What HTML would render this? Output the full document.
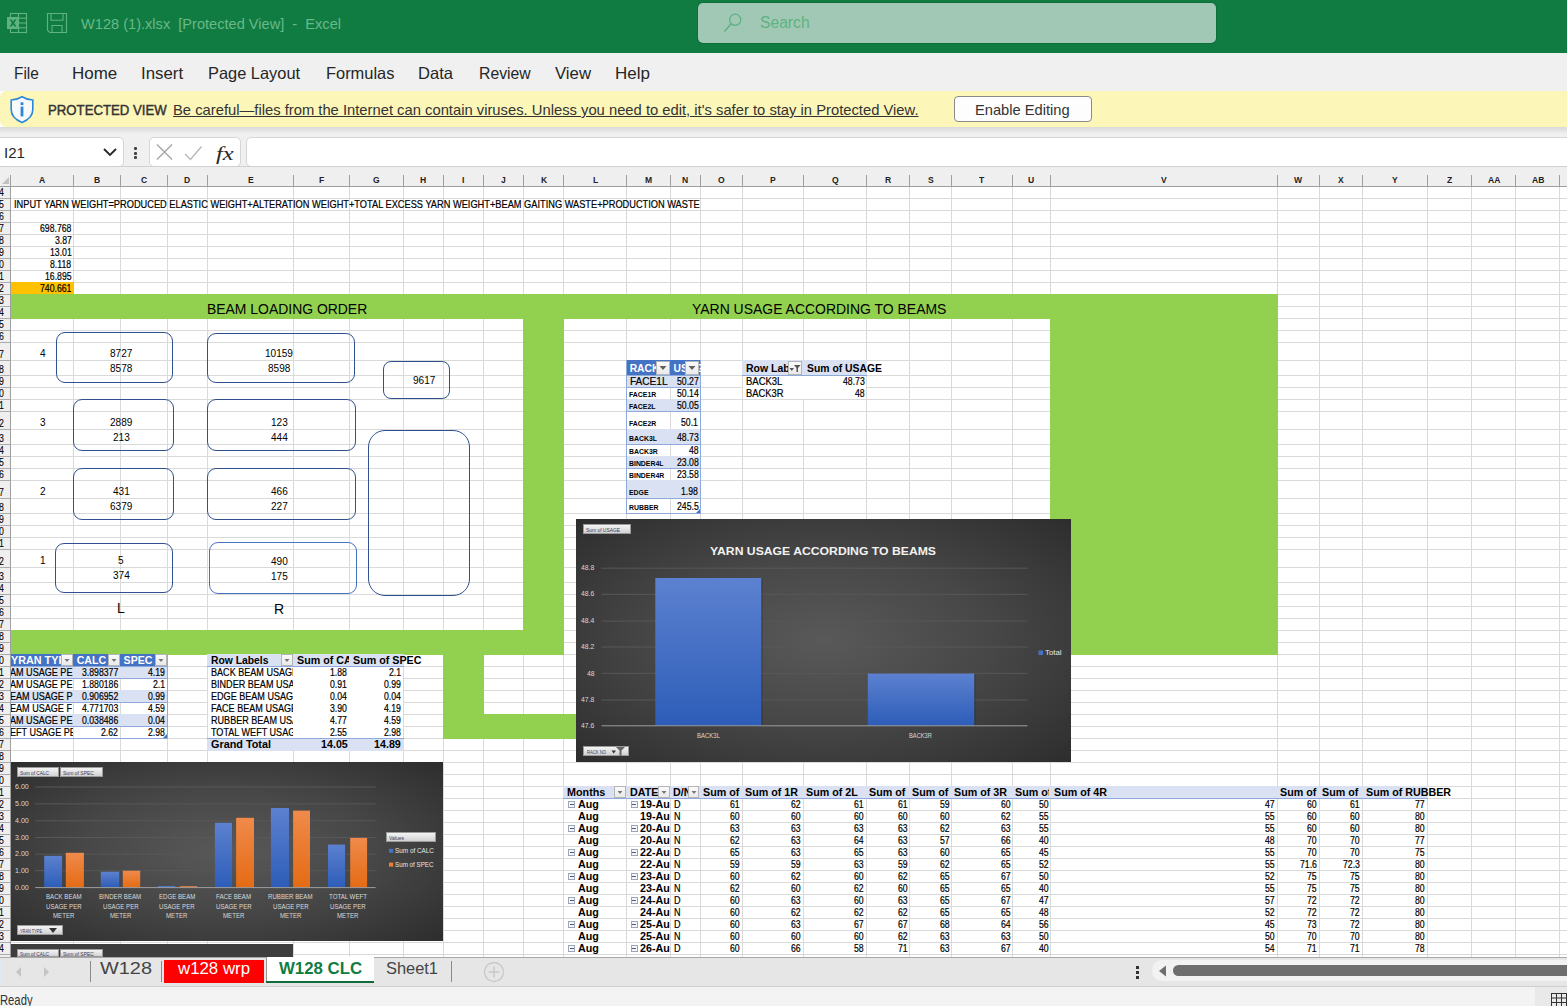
<!DOCTYPE html>
<html><head><meta charset="utf-8"><title>W128 (1).xlsx - Excel</title>
<style>
html,body{margin:0;padding:0;}
body{width:1567px;height:1006px;overflow:hidden;position:relative;background:#fff;font-family:"Liberation Sans",sans-serif;}
.t{position:absolute;white-space:pre;transform-origin:0 0;}
.r{position:absolute;box-sizing:border-box;}
svg{position:absolute;}
</style></head><body>
<div class="r" style="left:0px;top:0px;width:1567px;height:53px;background:#107c41"></div>
<svg style="left:6px;top:12px" width="22" height="22" viewBox="0 0 22 22">
<g fill="none" stroke="#5fb37f" stroke-width="1.1">
<rect x="4.5" y="1.5" width="16" height="19"/>
<line x1="4.5" y1="6.2" x2="20.5" y2="6.2"/><line x1="4.5" y1="11" x2="20.5" y2="11"/><line x1="4.5" y1="15.8" x2="20.5" y2="15.8"/>
<line x1="12.5" y1="1.5" x2="12.5" y2="20.5"/>
</g>
<rect x="1" y="5" width="12" height="12" fill="#5fb37f"/>
<path d="M3.6 7.4 L5.6 7.4 L7 9.7 L8.4 7.4 L10.4 7.4 L8.1 11 L10.4 14.6 L8.4 14.6 L7 12.3 L5.6 14.6 L3.6 14.6 L5.9 11 Z" fill="#107c41"/>
</svg>
<svg style="left:46px;top:12px" width="22" height="22" viewBox="0 0 22 22">
<g fill="none" stroke="#5fb37f" stroke-width="1.1">
<path d="M1.5 1.5 H20.5 V20.5 H3.8 L1.5 18.2 Z"/>
<path d="M5 1.5 V8.2 H17 V1.5"/>
<path d="M6 20.5 V13.5 H16 V20.5"/>
</g></svg>
<div class="t" style="left:81.00px;top:16px;font-size:15.0px;line-height:15.0px;color:#68b98a;transform:scaleX(0.9726);">W128 (1).xlsx  [Protected View]  -  Excel</div>
<div class="r" style="left:698px;top:3px;width:518px;height:40px;background:#a0c8b4;border-radius:5px;box-shadow:0 0 0 1px #0c6e39"></div>
<svg style="left:722px;top:12px" width="22" height="22" viewBox="0 0 22 22">
<circle cx="13.2" cy="7.8" r="5.6" fill="none" stroke="#5cb07f" stroke-width="1.2"/>
<line x1="9.2" y1="11.8" x2="2.5" y2="19.5" stroke="#5cb07f" stroke-width="1.3"/>
</svg>
<div class="t" style="left:760.00px;top:15px;font-size:16.0px;line-height:16.0px;color:#5eb381;transform:scaleX(0.9784);">Search</div>
<div class="r" style="left:0px;top:53px;width:1567px;height:38px;background:#f0f0f0"></div>
<div class="t" style="left:14.00px;top:65px;font-size:16.5px;line-height:16.5px;color:#262626;transform:scaleX(0.9327);">File</div>
<div class="t" style="left:71.50px;top:65px;font-size:16.5px;line-height:16.5px;color:#262626;transform:scaleX(1.0269);">Home</div>
<div class="t" style="left:141.20px;top:65px;font-size:16.5px;line-height:16.5px;color:#262626;transform:scaleX(1.0202);">Insert</div>
<div class="t" style="left:208.30px;top:65px;font-size:16.5px;line-height:16.5px;color:#262626;transform:scaleX(0.9939);">Page Layout</div>
<div class="t" style="left:325.50px;top:65px;font-size:16.5px;line-height:16.5px;color:#262626;transform:scaleX(0.9947);">Formulas</div>
<div class="t" style="left:418.30px;top:65px;font-size:16.5px;line-height:16.5px;color:#262626;transform:scaleX(1.0042);">Data</div>
<div class="t" style="left:478.60px;top:65px;font-size:16.5px;line-height:16.5px;color:#262626;transform:scaleX(0.9556);">Review</div>
<div class="t" style="left:555.20px;top:65px;font-size:16.5px;line-height:16.5px;color:#262626;transform:scaleX(1.0150);">View</div>
<div class="t" style="left:615.10px;top:65px;font-size:16.5px;line-height:16.5px;color:#262626;transform:scaleX(1.0284);">Help</div>
<div class="r" style="left:0px;top:127px;width:1567px;height:10px;background:#f0f0f0"></div>
<div class="r" style="left:0px;top:127px;width:1567px;height:7px;background:linear-gradient(#d9d9d9,#f0f0f0)"></div>
<div class="r" style="left:0px;top:91px;width:1567px;height:36px;background:#fcf6b8;border-radius:6px 0 0 6px"></div>
<svg style="left:9px;top:95px" width="26" height="29" viewBox="0 0 26 29">
<path d="M13 1.8 C9.5 4 6 5 2.2 5 V14.5 C2.2 20.5 7 25 13 27.5 C19 25 23.8 20.5 23.8 14.5 V5 C20 5 16.5 4 13 1.8 Z" fill="#f8f9fb" stroke="#2b88d8" stroke-width="1.6"/>
<rect x="11.6" y="7.3" width="2.8" height="2.8" fill="#2b88d8"/>
<rect x="11.6" y="11.6" width="2.8" height="9.8" fill="#2b88d8"/>
</svg>
<div class="t" style="left:47.90px;top:103px;font-size:14.5px;line-height:14.5px;color:#333333;transform:scaleX(0.9095);-webkit-text-stroke:0.45px #333;">PROTECTED VIEW</div>
<div class="t" style="left:173.30px;top:103px;font-size:14.8px;line-height:14.8px;color:#333333;transform:scaleX(0.9982);text-decoration:underline;">Be careful—files from the Internet can contain viruses. Unless you need to edit, it's safer to stay in Protected View.</div>
<div class="r" style="left:954px;top:96px;width:138px;height:26px;background:#fdfdfd;border:1px solid #8a8a8a;border-radius:4px"></div>
<div class="t" style="left:974.70px;top:103px;font-size:14.8px;line-height:14.8px;color:#333333;transform:scaleX(0.9921);">Enable Editing</div>
<div class="r" style="left:0px;top:137px;width:1567px;height:29px;background:#f0f0f0"></div>
<div class="r" style="left:-4px;top:137px;width:128px;height:30px;background:#fff;border:1px solid #d6d6d6;border-radius:5px"></div>
<div class="t" style="left:4.00px;top:145px;font-size:15.0px;line-height:15.0px;color:#262626;transform:scaleX(1.0071);">I21</div>
<svg style="left:102px;top:145px" width="16" height="14" viewBox="0 0 16 14">
<path d="M2 4 L8 10 L14 4" fill="none" stroke="#262626" stroke-width="1.8"/></svg>
<div class="r" style="left:134px;top:147px;width:3px;height:3px;background:#444;border-radius:1px"></div>
<div class="r" style="left:134px;top:151.5px;width:3px;height:3px;background:#444;border-radius:1px"></div>
<div class="r" style="left:134px;top:156px;width:3px;height:3px;background:#444;border-radius:1px"></div>
<div class="r" style="left:149px;top:137px;width:92px;height:30px;background:#fff;border:1px solid #d6d6d6;border-radius:5px"></div>
<svg style="left:150px;top:138px" width="90" height="28" viewBox="0 0 90 28">
<path d="M7 6.5 L22 21.5 M22 6.5 L7 21.5" stroke="#a6a6a6" stroke-width="1.4" fill="none"/>
<path d="M35 16 L40.5 21.5 L51.5 8.5" stroke="#b8b8b8" stroke-width="1.4" fill="none"/>
</svg>
<div class="t" style="left:216.00px;top:144px;font-size:19.0px;line-height:19.0px;color:#262626;transform:scaleX(1.2856);font-family:'Liberation Serif',serif;font-style:italic;">fx</div>
<div class="r" style="left:246px;top:137px;width:1330px;height:30px;background:#fff;border:1px solid #d6d6d6;border-radius:5px 0 0 5px"></div>
<div class="r" style="left:0px;top:166px;width:1567px;height:1px;background:#d0d0d0"></div>
<div class="r" style="left:0px;top:167px;width:1567px;height:19px;background:#efefef"></div>
<div class="r" style="left:0px;top:186px;width:1567px;height:1px;background:#9e9e9e"></div>
<svg style="left:2px;top:176px" width="8" height="9" viewBox="0 0 8 9"><path d="M7 1 L7 8 L0 8 Z" fill="#c2c2c2"/></svg>
<div class="r" style="left:10px;top:175px;width:1px;height:12px;background:#a0a0a0"></div>
<div class="r" style="left:73px;top:175px;width:1px;height:11px;background:#a0a0a0"></div>
<div class="t" style="left:39.15px;top:176px;font-size:9.0px;line-height:9.0px;color:#222;transform:scaleX(0.9500);font-weight:bold;">A</div>
<div class="r" style="left:120px;top:175px;width:1px;height:11px;background:#a0a0a0"></div>
<div class="t" style="left:94.15px;top:176px;font-size:9.0px;line-height:9.0px;color:#222;transform:scaleX(0.9500);font-weight:bold;">B</div>
<div class="r" style="left:167px;top:175px;width:1px;height:11px;background:#a0a0a0"></div>
<div class="t" style="left:140.91px;top:176px;font-size:9.0px;line-height:9.0px;color:#222;transform:scaleX(0.9500);font-weight:bold;">C</div>
<div class="r" style="left:207px;top:175px;width:1px;height:11px;background:#a0a0a0"></div>
<div class="t" style="left:184.41px;top:176px;font-size:9.0px;line-height:9.0px;color:#222;transform:scaleX(0.9500);font-weight:bold;">D</div>
<div class="r" style="left:293px;top:175px;width:1px;height:11px;background:#a0a0a0"></div>
<div class="t" style="left:247.65px;top:176px;font-size:9.0px;line-height:9.0px;color:#222;transform:scaleX(0.9500);font-weight:bold;">E</div>
<div class="r" style="left:349px;top:175px;width:1px;height:11px;background:#a0a0a0"></div>
<div class="t" style="left:318.89px;top:176px;font-size:9.0px;line-height:9.0px;color:#222;transform:scaleX(0.9500);font-weight:bold;">F</div>
<div class="r" style="left:403px;top:175px;width:1px;height:11px;background:#a0a0a0"></div>
<div class="t" style="left:373.17px;top:176px;font-size:9.0px;line-height:9.0px;color:#222;transform:scaleX(0.9500);font-weight:bold;">G</div>
<div class="r" style="left:443px;top:175px;width:1px;height:11px;background:#a0a0a0"></div>
<div class="t" style="left:420.41px;top:176px;font-size:9.0px;line-height:9.0px;color:#222;transform:scaleX(0.9500);font-weight:bold;">H</div>
<div class="r" style="left:483px;top:175px;width:1px;height:11px;background:#a0a0a0"></div>
<div class="t" style="left:462.31px;top:176px;font-size:9.0px;line-height:9.0px;color:#222;transform:scaleX(0.9500);font-weight:bold;">I</div>
<div class="r" style="left:523px;top:175px;width:1px;height:11px;background:#a0a0a0"></div>
<div class="t" style="left:501.36px;top:176px;font-size:9.0px;line-height:9.0px;color:#222;transform:scaleX(0.9500);font-weight:bold;">J</div>
<div class="r" style="left:563px;top:175px;width:1px;height:11px;background:#a0a0a0"></div>
<div class="t" style="left:540.65px;top:176px;font-size:9.0px;line-height:9.0px;color:#222;transform:scaleX(0.9500);font-weight:bold;">K</div>
<div class="r" style="left:626px;top:175px;width:1px;height:11px;background:#a0a0a0"></div>
<div class="t" style="left:592.62px;top:176px;font-size:9.0px;line-height:9.0px;color:#222;transform:scaleX(0.9500);font-weight:bold;">L</div>
<div class="r" style="left:670px;top:175px;width:1px;height:11px;background:#a0a0a0"></div>
<div class="t" style="left:644.94px;top:176px;font-size:9.0px;line-height:9.0px;color:#222;transform:scaleX(0.9500);font-weight:bold;">M</div>
<div class="r" style="left:700px;top:175px;width:1px;height:11px;background:#a0a0a0"></div>
<div class="t" style="left:682.41px;top:176px;font-size:9.0px;line-height:9.0px;color:#222;transform:scaleX(0.9500);font-weight:bold;">N</div>
<div class="r" style="left:742px;top:175px;width:1px;height:11px;background:#a0a0a0"></div>
<div class="t" style="left:718.17px;top:176px;font-size:9.0px;line-height:9.0px;color:#222;transform:scaleX(0.9500);font-weight:bold;">O</div>
<div class="r" style="left:803px;top:175px;width:1px;height:11px;background:#a0a0a0"></div>
<div class="t" style="left:770.15px;top:176px;font-size:9.0px;line-height:9.0px;color:#222;transform:scaleX(0.9500);font-weight:bold;">P</div>
<div class="r" style="left:866px;top:175px;width:1px;height:11px;background:#a0a0a0"></div>
<div class="t" style="left:831.67px;top:176px;font-size:9.0px;line-height:9.0px;color:#222;transform:scaleX(0.9500);font-weight:bold;">Q</div>
<div class="r" style="left:909px;top:175px;width:1px;height:11px;background:#a0a0a0"></div>
<div class="t" style="left:884.91px;top:176px;font-size:9.0px;line-height:9.0px;color:#222;transform:scaleX(0.9500);font-weight:bold;">R</div>
<div class="r" style="left:951px;top:175px;width:1px;height:11px;background:#a0a0a0"></div>
<div class="t" style="left:927.65px;top:176px;font-size:9.0px;line-height:9.0px;color:#222;transform:scaleX(0.9500);font-weight:bold;">S</div>
<div class="r" style="left:1012px;top:175px;width:1px;height:11px;background:#a0a0a0"></div>
<div class="t" style="left:979.39px;top:176px;font-size:9.0px;line-height:9.0px;color:#222;transform:scaleX(0.9500);font-weight:bold;">T</div>
<div class="r" style="left:1050px;top:175px;width:1px;height:11px;background:#a0a0a0"></div>
<div class="t" style="left:1028.41px;top:176px;font-size:9.0px;line-height:9.0px;color:#222;transform:scaleX(0.9500);font-weight:bold;">U</div>
<div class="r" style="left:1277px;top:175px;width:1px;height:11px;background:#a0a0a0"></div>
<div class="t" style="left:1161.15px;top:176px;font-size:9.0px;line-height:9.0px;color:#222;transform:scaleX(0.9500);font-weight:bold;">V</div>
<div class="r" style="left:1319px;top:175px;width:1px;height:11px;background:#a0a0a0"></div>
<div class="t" style="left:1294.46px;top:176px;font-size:9.0px;line-height:9.0px;color:#222;transform:scaleX(0.9500);font-weight:bold;">W</div>
<div class="r" style="left:1362px;top:175px;width:1px;height:11px;background:#a0a0a0"></div>
<div class="t" style="left:1338.15px;top:176px;font-size:9.0px;line-height:9.0px;color:#222;transform:scaleX(0.9500);font-weight:bold;">X</div>
<div class="r" style="left:1427px;top:175px;width:1px;height:11px;background:#a0a0a0"></div>
<div class="t" style="left:1392.15px;top:176px;font-size:9.0px;line-height:9.0px;color:#222;transform:scaleX(0.9500);font-weight:bold;">Y</div>
<div class="r" style="left:1471px;top:175px;width:1px;height:11px;background:#a0a0a0"></div>
<div class="t" style="left:1446.89px;top:176px;font-size:9.0px;line-height:9.0px;color:#222;transform:scaleX(0.9500);font-weight:bold;">Z</div>
<div class="r" style="left:1515px;top:175px;width:1px;height:11px;background:#a0a0a0"></div>
<div class="t" style="left:1487.80px;top:176px;font-size:9.0px;line-height:9.0px;color:#222;transform:scaleX(0.9500);font-weight:bold;">AA</div>
<div class="r" style="left:1559px;top:175px;width:1px;height:11px;background:#a0a0a0"></div>
<div class="t" style="left:1531.80px;top:176px;font-size:9.0px;line-height:9.0px;color:#222;transform:scaleX(0.9500);font-weight:bold;">AB</div>
<div class="r" style="left:11px;top:187px;width:1556px;height:770px;background:#ffffff"></div>
<div class="r" style="left:73px;top:187px;width:1px;height:770px;background:#dadada"></div>
<div class="r" style="left:120px;top:187px;width:1px;height:770px;background:#dadada"></div>
<div class="r" style="left:167px;top:187px;width:1px;height:770px;background:#dadada"></div>
<div class="r" style="left:207px;top:187px;width:1px;height:770px;background:#dadada"></div>
<div class="r" style="left:293px;top:187px;width:1px;height:770px;background:#dadada"></div>
<div class="r" style="left:349px;top:187px;width:1px;height:770px;background:#dadada"></div>
<div class="r" style="left:403px;top:187px;width:1px;height:770px;background:#dadada"></div>
<div class="r" style="left:443px;top:187px;width:1px;height:770px;background:#dadada"></div>
<div class="r" style="left:483px;top:187px;width:1px;height:770px;background:#dadada"></div>
<div class="r" style="left:523px;top:187px;width:1px;height:770px;background:#dadada"></div>
<div class="r" style="left:563px;top:187px;width:1px;height:770px;background:#dadada"></div>
<div class="r" style="left:626px;top:187px;width:1px;height:770px;background:#dadada"></div>
<div class="r" style="left:670px;top:187px;width:1px;height:770px;background:#dadada"></div>
<div class="r" style="left:700px;top:187px;width:1px;height:770px;background:#dadada"></div>
<div class="r" style="left:742px;top:187px;width:1px;height:770px;background:#dadada"></div>
<div class="r" style="left:803px;top:187px;width:1px;height:770px;background:#dadada"></div>
<div class="r" style="left:866px;top:187px;width:1px;height:770px;background:#dadada"></div>
<div class="r" style="left:909px;top:187px;width:1px;height:770px;background:#dadada"></div>
<div class="r" style="left:951px;top:187px;width:1px;height:770px;background:#dadada"></div>
<div class="r" style="left:1012px;top:187px;width:1px;height:770px;background:#dadada"></div>
<div class="r" style="left:1050px;top:187px;width:1px;height:770px;background:#dadada"></div>
<div class="r" style="left:1277px;top:187px;width:1px;height:770px;background:#dadada"></div>
<div class="r" style="left:1319px;top:187px;width:1px;height:770px;background:#dadada"></div>
<div class="r" style="left:1362px;top:187px;width:1px;height:770px;background:#dadada"></div>
<div class="r" style="left:1427px;top:187px;width:1px;height:770px;background:#dadada"></div>
<div class="r" style="left:1471px;top:187px;width:1px;height:770px;background:#dadada"></div>
<div class="r" style="left:1515px;top:187px;width:1px;height:770px;background:#dadada"></div>
<div class="r" style="left:1559px;top:187px;width:1px;height:770px;background:#dadada"></div>
<div class="r" style="left:11px;top:198px;width:1556px;height:1px;background:#dadada"></div>
<div class="r" style="left:11px;top:210px;width:1556px;height:1px;background:#dadada"></div>
<div class="r" style="left:11px;top:222px;width:1556px;height:1px;background:#dadada"></div>
<div class="r" style="left:11px;top:234px;width:1556px;height:1px;background:#dadada"></div>
<div class="r" style="left:11px;top:246px;width:1556px;height:1px;background:#dadada"></div>
<div class="r" style="left:11px;top:258px;width:1556px;height:1px;background:#dadada"></div>
<div class="r" style="left:11px;top:270px;width:1556px;height:1px;background:#dadada"></div>
<div class="r" style="left:11px;top:282px;width:1556px;height:1px;background:#dadada"></div>
<div class="r" style="left:11px;top:294px;width:1556px;height:1px;background:#dadada"></div>
<div class="r" style="left:11px;top:306px;width:1556px;height:1px;background:#dadada"></div>
<div class="r" style="left:11px;top:318px;width:1556px;height:1px;background:#dadada"></div>
<div class="r" style="left:11px;top:330px;width:1556px;height:1px;background:#dadada"></div>
<div class="r" style="left:11px;top:342px;width:1556px;height:1px;background:#dadada"></div>
<div class="r" style="left:11px;top:360px;width:1556px;height:1px;background:#dadada"></div>
<div class="r" style="left:11px;top:375px;width:1556px;height:1px;background:#dadada"></div>
<div class="r" style="left:11px;top:387px;width:1556px;height:1px;background:#dadada"></div>
<div class="r" style="left:11px;top:399px;width:1556px;height:1px;background:#dadada"></div>
<div class="r" style="left:11px;top:411px;width:1556px;height:1px;background:#dadada"></div>
<div class="r" style="left:11px;top:429px;width:1556px;height:1px;background:#dadada"></div>
<div class="r" style="left:11px;top:444px;width:1556px;height:1px;background:#dadada"></div>
<div class="r" style="left:11px;top:456px;width:1556px;height:1px;background:#dadada"></div>
<div class="r" style="left:11px;top:468px;width:1556px;height:1px;background:#dadada"></div>
<div class="r" style="left:11px;top:480px;width:1556px;height:1px;background:#dadada"></div>
<div class="r" style="left:11px;top:498px;width:1556px;height:1px;background:#dadada"></div>
<div class="r" style="left:11px;top:513px;width:1556px;height:1px;background:#dadada"></div>
<div class="r" style="left:11px;top:525px;width:1556px;height:1px;background:#dadada"></div>
<div class="r" style="left:11px;top:537px;width:1556px;height:1px;background:#dadada"></div>
<div class="r" style="left:11px;top:549px;width:1556px;height:1px;background:#dadada"></div>
<div class="r" style="left:11px;top:567px;width:1556px;height:1px;background:#dadada"></div>
<div class="r" style="left:11px;top:582px;width:1556px;height:1px;background:#dadada"></div>
<div class="r" style="left:11px;top:594px;width:1556px;height:1px;background:#dadada"></div>
<div class="r" style="left:11px;top:606px;width:1556px;height:1px;background:#dadada"></div>
<div class="r" style="left:11px;top:618px;width:1556px;height:1px;background:#dadada"></div>
<div class="r" style="left:11px;top:630px;width:1556px;height:1px;background:#dadada"></div>
<div class="r" style="left:11px;top:642px;width:1556px;height:1px;background:#dadada"></div>
<div class="r" style="left:11px;top:654px;width:1556px;height:1px;background:#dadada"></div>
<div class="r" style="left:11px;top:666px;width:1556px;height:1px;background:#dadada"></div>
<div class="r" style="left:11px;top:678px;width:1556px;height:1px;background:#dadada"></div>
<div class="r" style="left:11px;top:690px;width:1556px;height:1px;background:#dadada"></div>
<div class="r" style="left:11px;top:702px;width:1556px;height:1px;background:#dadada"></div>
<div class="r" style="left:11px;top:714px;width:1556px;height:1px;background:#dadada"></div>
<div class="r" style="left:11px;top:726px;width:1556px;height:1px;background:#dadada"></div>
<div class="r" style="left:11px;top:738px;width:1556px;height:1px;background:#dadada"></div>
<div class="r" style="left:11px;top:750px;width:1556px;height:1px;background:#dadada"></div>
<div class="r" style="left:11px;top:762px;width:1556px;height:1px;background:#dadada"></div>
<div class="r" style="left:11px;top:774px;width:1556px;height:1px;background:#dadada"></div>
<div class="r" style="left:11px;top:786px;width:1556px;height:1px;background:#dadada"></div>
<div class="r" style="left:11px;top:798px;width:1556px;height:1px;background:#dadada"></div>
<div class="r" style="left:11px;top:810px;width:1556px;height:1px;background:#dadada"></div>
<div class="r" style="left:11px;top:822px;width:1556px;height:1px;background:#dadada"></div>
<div class="r" style="left:11px;top:834px;width:1556px;height:1px;background:#dadada"></div>
<div class="r" style="left:11px;top:846px;width:1556px;height:1px;background:#dadada"></div>
<div class="r" style="left:11px;top:858px;width:1556px;height:1px;background:#dadada"></div>
<div class="r" style="left:11px;top:870px;width:1556px;height:1px;background:#dadada"></div>
<div class="r" style="left:11px;top:882px;width:1556px;height:1px;background:#dadada"></div>
<div class="r" style="left:11px;top:894px;width:1556px;height:1px;background:#dadada"></div>
<div class="r" style="left:11px;top:906px;width:1556px;height:1px;background:#dadada"></div>
<div class="r" style="left:11px;top:918px;width:1556px;height:1px;background:#dadada"></div>
<div class="r" style="left:11px;top:930px;width:1556px;height:1px;background:#dadada"></div>
<div class="r" style="left:11px;top:942px;width:1556px;height:1px;background:#dadada"></div>
<div class="r" style="left:11px;top:954px;width:1556px;height:1px;background:#dadada"></div>
<div class="r" style="left:0px;top:187px;width:10px;height:770px;background:#efefef"></div>
<div class="r" style="left:10px;top:187px;width:1px;height:770px;background:#a0a0a0"></div>
<div class="r" style="left:0px;top:198px;width:10px;height:1px;background:#ababab"></div>
<div class="t" style="left:-0.67px;top:188px;font-size:10.3px;line-height:10.3px;color:#000;transform:scaleX(0.8500);-webkit-text-stroke:0.1px #000;">4</div>
<div class="r" style="left:0px;top:210px;width:10px;height:1px;background:#ababab"></div>
<div class="t" style="left:-0.67px;top:200px;font-size:10.3px;line-height:10.3px;color:#000;transform:scaleX(0.8500);-webkit-text-stroke:0.1px #000;">5</div>
<div class="r" style="left:0px;top:222px;width:10px;height:1px;background:#ababab"></div>
<div class="t" style="left:-0.67px;top:212px;font-size:10.3px;line-height:10.3px;color:#000;transform:scaleX(0.8500);-webkit-text-stroke:0.1px #000;">6</div>
<div class="r" style="left:0px;top:234px;width:10px;height:1px;background:#ababab"></div>
<div class="t" style="left:-0.67px;top:224px;font-size:10.3px;line-height:10.3px;color:#000;transform:scaleX(0.8500);-webkit-text-stroke:0.1px #000;">7</div>
<div class="r" style="left:0px;top:246px;width:10px;height:1px;background:#ababab"></div>
<div class="t" style="left:-0.67px;top:236px;font-size:10.3px;line-height:10.3px;color:#000;transform:scaleX(0.8500);-webkit-text-stroke:0.1px #000;">8</div>
<div class="r" style="left:0px;top:258px;width:10px;height:1px;background:#ababab"></div>
<div class="t" style="left:-0.67px;top:248px;font-size:10.3px;line-height:10.3px;color:#000;transform:scaleX(0.8500);-webkit-text-stroke:0.1px #000;">9</div>
<div class="r" style="left:0px;top:270px;width:10px;height:1px;background:#ababab"></div>
<div class="t" style="left:-0.67px;top:260px;font-size:10.3px;line-height:10.3px;color:#000;transform:scaleX(0.8500);-webkit-text-stroke:0.1px #000;">0</div>
<div class="r" style="left:0px;top:282px;width:10px;height:1px;background:#ababab"></div>
<div class="t" style="left:-0.67px;top:272px;font-size:10.3px;line-height:10.3px;color:#000;transform:scaleX(0.8500);-webkit-text-stroke:0.1px #000;">1</div>
<div class="r" style="left:0px;top:294px;width:10px;height:1px;background:#ababab"></div>
<div class="t" style="left:-0.67px;top:284px;font-size:10.3px;line-height:10.3px;color:#000;transform:scaleX(0.8500);-webkit-text-stroke:0.1px #000;">2</div>
<div class="r" style="left:0px;top:306px;width:10px;height:1px;background:#ababab"></div>
<div class="t" style="left:-0.67px;top:296px;font-size:10.3px;line-height:10.3px;color:#000;transform:scaleX(0.8500);-webkit-text-stroke:0.1px #000;">3</div>
<div class="r" style="left:0px;top:318px;width:10px;height:1px;background:#ababab"></div>
<div class="t" style="left:-0.67px;top:308px;font-size:10.3px;line-height:10.3px;color:#000;transform:scaleX(0.8500);-webkit-text-stroke:0.1px #000;">4</div>
<div class="r" style="left:0px;top:330px;width:10px;height:1px;background:#ababab"></div>
<div class="t" style="left:-0.67px;top:320px;font-size:10.3px;line-height:10.3px;color:#000;transform:scaleX(0.8500);-webkit-text-stroke:0.1px #000;">5</div>
<div class="r" style="left:0px;top:342px;width:10px;height:1px;background:#ababab"></div>
<div class="t" style="left:-0.67px;top:332px;font-size:10.3px;line-height:10.3px;color:#000;transform:scaleX(0.8500);-webkit-text-stroke:0.1px #000;">6</div>
<div class="r" style="left:0px;top:360px;width:10px;height:1px;background:#ababab"></div>
<div class="t" style="left:-0.67px;top:350px;font-size:10.3px;line-height:10.3px;color:#000;transform:scaleX(0.8500);-webkit-text-stroke:0.1px #000;">7</div>
<div class="r" style="left:0px;top:375px;width:10px;height:1px;background:#ababab"></div>
<div class="t" style="left:-0.67px;top:365px;font-size:10.3px;line-height:10.3px;color:#000;transform:scaleX(0.8500);-webkit-text-stroke:0.1px #000;">8</div>
<div class="r" style="left:0px;top:387px;width:10px;height:1px;background:#ababab"></div>
<div class="t" style="left:-0.67px;top:377px;font-size:10.3px;line-height:10.3px;color:#000;transform:scaleX(0.8500);-webkit-text-stroke:0.1px #000;">9</div>
<div class="r" style="left:0px;top:399px;width:10px;height:1px;background:#ababab"></div>
<div class="t" style="left:-0.67px;top:389px;font-size:10.3px;line-height:10.3px;color:#000;transform:scaleX(0.8500);-webkit-text-stroke:0.1px #000;">0</div>
<div class="r" style="left:0px;top:411px;width:10px;height:1px;background:#ababab"></div>
<div class="t" style="left:-0.67px;top:401px;font-size:10.3px;line-height:10.3px;color:#000;transform:scaleX(0.8500);-webkit-text-stroke:0.1px #000;">1</div>
<div class="r" style="left:0px;top:429px;width:10px;height:1px;background:#ababab"></div>
<div class="t" style="left:-0.67px;top:419px;font-size:10.3px;line-height:10.3px;color:#000;transform:scaleX(0.8500);-webkit-text-stroke:0.1px #000;">2</div>
<div class="r" style="left:0px;top:444px;width:10px;height:1px;background:#ababab"></div>
<div class="t" style="left:-0.67px;top:434px;font-size:10.3px;line-height:10.3px;color:#000;transform:scaleX(0.8500);-webkit-text-stroke:0.1px #000;">3</div>
<div class="r" style="left:0px;top:456px;width:10px;height:1px;background:#ababab"></div>
<div class="t" style="left:-0.67px;top:446px;font-size:10.3px;line-height:10.3px;color:#000;transform:scaleX(0.8500);-webkit-text-stroke:0.1px #000;">4</div>
<div class="r" style="left:0px;top:468px;width:10px;height:1px;background:#ababab"></div>
<div class="t" style="left:-0.67px;top:458px;font-size:10.3px;line-height:10.3px;color:#000;transform:scaleX(0.8500);-webkit-text-stroke:0.1px #000;">5</div>
<div class="r" style="left:0px;top:480px;width:10px;height:1px;background:#ababab"></div>
<div class="t" style="left:-0.67px;top:470px;font-size:10.3px;line-height:10.3px;color:#000;transform:scaleX(0.8500);-webkit-text-stroke:0.1px #000;">6</div>
<div class="r" style="left:0px;top:498px;width:10px;height:1px;background:#ababab"></div>
<div class="t" style="left:-0.67px;top:488px;font-size:10.3px;line-height:10.3px;color:#000;transform:scaleX(0.8500);-webkit-text-stroke:0.1px #000;">7</div>
<div class="r" style="left:0px;top:513px;width:10px;height:1px;background:#ababab"></div>
<div class="t" style="left:-0.67px;top:503px;font-size:10.3px;line-height:10.3px;color:#000;transform:scaleX(0.8500);-webkit-text-stroke:0.1px #000;">8</div>
<div class="r" style="left:0px;top:525px;width:10px;height:1px;background:#ababab"></div>
<div class="t" style="left:-0.67px;top:515px;font-size:10.3px;line-height:10.3px;color:#000;transform:scaleX(0.8500);-webkit-text-stroke:0.1px #000;">9</div>
<div class="r" style="left:0px;top:537px;width:10px;height:1px;background:#ababab"></div>
<div class="t" style="left:-0.67px;top:527px;font-size:10.3px;line-height:10.3px;color:#000;transform:scaleX(0.8500);-webkit-text-stroke:0.1px #000;">0</div>
<div class="r" style="left:0px;top:549px;width:10px;height:1px;background:#ababab"></div>
<div class="t" style="left:-0.67px;top:539px;font-size:10.3px;line-height:10.3px;color:#000;transform:scaleX(0.8500);-webkit-text-stroke:0.1px #000;">1</div>
<div class="r" style="left:0px;top:567px;width:10px;height:1px;background:#ababab"></div>
<div class="t" style="left:-0.67px;top:557px;font-size:10.3px;line-height:10.3px;color:#000;transform:scaleX(0.8500);-webkit-text-stroke:0.1px #000;">2</div>
<div class="r" style="left:0px;top:582px;width:10px;height:1px;background:#ababab"></div>
<div class="t" style="left:-0.67px;top:572px;font-size:10.3px;line-height:10.3px;color:#000;transform:scaleX(0.8500);-webkit-text-stroke:0.1px #000;">3</div>
<div class="r" style="left:0px;top:594px;width:10px;height:1px;background:#ababab"></div>
<div class="t" style="left:-0.67px;top:584px;font-size:10.3px;line-height:10.3px;color:#000;transform:scaleX(0.8500);-webkit-text-stroke:0.1px #000;">4</div>
<div class="r" style="left:0px;top:606px;width:10px;height:1px;background:#ababab"></div>
<div class="t" style="left:-0.67px;top:596px;font-size:10.3px;line-height:10.3px;color:#000;transform:scaleX(0.8500);-webkit-text-stroke:0.1px #000;">5</div>
<div class="r" style="left:0px;top:618px;width:10px;height:1px;background:#ababab"></div>
<div class="t" style="left:-0.67px;top:608px;font-size:10.3px;line-height:10.3px;color:#000;transform:scaleX(0.8500);-webkit-text-stroke:0.1px #000;">6</div>
<div class="r" style="left:0px;top:630px;width:10px;height:1px;background:#ababab"></div>
<div class="t" style="left:-0.67px;top:620px;font-size:10.3px;line-height:10.3px;color:#000;transform:scaleX(0.8500);-webkit-text-stroke:0.1px #000;">7</div>
<div class="r" style="left:0px;top:642px;width:10px;height:1px;background:#ababab"></div>
<div class="t" style="left:-0.67px;top:632px;font-size:10.3px;line-height:10.3px;color:#000;transform:scaleX(0.8500);-webkit-text-stroke:0.1px #000;">8</div>
<div class="r" style="left:0px;top:654px;width:10px;height:1px;background:#ababab"></div>
<div class="t" style="left:-0.67px;top:644px;font-size:10.3px;line-height:10.3px;color:#000;transform:scaleX(0.8500);-webkit-text-stroke:0.1px #000;">9</div>
<div class="r" style="left:0px;top:666px;width:10px;height:1px;background:#ababab"></div>
<div class="t" style="left:-0.67px;top:656px;font-size:10.3px;line-height:10.3px;color:#000;transform:scaleX(0.8500);-webkit-text-stroke:0.1px #000;">0</div>
<div class="r" style="left:0px;top:678px;width:10px;height:1px;background:#ababab"></div>
<div class="t" style="left:-0.67px;top:668px;font-size:10.3px;line-height:10.3px;color:#000;transform:scaleX(0.8500);-webkit-text-stroke:0.1px #000;">1</div>
<div class="r" style="left:0px;top:690px;width:10px;height:1px;background:#ababab"></div>
<div class="t" style="left:-0.67px;top:680px;font-size:10.3px;line-height:10.3px;color:#000;transform:scaleX(0.8500);-webkit-text-stroke:0.1px #000;">2</div>
<div class="r" style="left:0px;top:702px;width:10px;height:1px;background:#ababab"></div>
<div class="t" style="left:-0.67px;top:692px;font-size:10.3px;line-height:10.3px;color:#000;transform:scaleX(0.8500);-webkit-text-stroke:0.1px #000;">3</div>
<div class="r" style="left:0px;top:714px;width:10px;height:1px;background:#ababab"></div>
<div class="t" style="left:-0.67px;top:704px;font-size:10.3px;line-height:10.3px;color:#000;transform:scaleX(0.8500);-webkit-text-stroke:0.1px #000;">4</div>
<div class="r" style="left:0px;top:726px;width:10px;height:1px;background:#ababab"></div>
<div class="t" style="left:-0.67px;top:716px;font-size:10.3px;line-height:10.3px;color:#000;transform:scaleX(0.8500);-webkit-text-stroke:0.1px #000;">5</div>
<div class="r" style="left:0px;top:738px;width:10px;height:1px;background:#ababab"></div>
<div class="t" style="left:-0.67px;top:728px;font-size:10.3px;line-height:10.3px;color:#000;transform:scaleX(0.8500);-webkit-text-stroke:0.1px #000;">6</div>
<div class="r" style="left:0px;top:750px;width:10px;height:1px;background:#ababab"></div>
<div class="t" style="left:-0.67px;top:740px;font-size:10.3px;line-height:10.3px;color:#000;transform:scaleX(0.8500);-webkit-text-stroke:0.1px #000;">7</div>
<div class="r" style="left:0px;top:762px;width:10px;height:1px;background:#ababab"></div>
<div class="t" style="left:-0.67px;top:752px;font-size:10.3px;line-height:10.3px;color:#000;transform:scaleX(0.8500);-webkit-text-stroke:0.1px #000;">8</div>
<div class="r" style="left:0px;top:774px;width:10px;height:1px;background:#ababab"></div>
<div class="t" style="left:-0.67px;top:764px;font-size:10.3px;line-height:10.3px;color:#000;transform:scaleX(0.8500);-webkit-text-stroke:0.1px #000;">9</div>
<div class="r" style="left:0px;top:786px;width:10px;height:1px;background:#ababab"></div>
<div class="t" style="left:-0.67px;top:776px;font-size:10.3px;line-height:10.3px;color:#000;transform:scaleX(0.8500);-webkit-text-stroke:0.1px #000;">0</div>
<div class="r" style="left:0px;top:798px;width:10px;height:1px;background:#ababab"></div>
<div class="t" style="left:-0.67px;top:788px;font-size:10.3px;line-height:10.3px;color:#000;transform:scaleX(0.8500);-webkit-text-stroke:0.1px #000;">1</div>
<div class="r" style="left:0px;top:810px;width:10px;height:1px;background:#ababab"></div>
<div class="t" style="left:-0.67px;top:800px;font-size:10.3px;line-height:10.3px;color:#000;transform:scaleX(0.8500);-webkit-text-stroke:0.1px #000;">2</div>
<div class="r" style="left:0px;top:822px;width:10px;height:1px;background:#ababab"></div>
<div class="t" style="left:-0.67px;top:812px;font-size:10.3px;line-height:10.3px;color:#000;transform:scaleX(0.8500);-webkit-text-stroke:0.1px #000;">3</div>
<div class="r" style="left:0px;top:834px;width:10px;height:1px;background:#ababab"></div>
<div class="t" style="left:-0.67px;top:824px;font-size:10.3px;line-height:10.3px;color:#000;transform:scaleX(0.8500);-webkit-text-stroke:0.1px #000;">4</div>
<div class="r" style="left:0px;top:846px;width:10px;height:1px;background:#ababab"></div>
<div class="t" style="left:-0.67px;top:836px;font-size:10.3px;line-height:10.3px;color:#000;transform:scaleX(0.8500);-webkit-text-stroke:0.1px #000;">5</div>
<div class="r" style="left:0px;top:858px;width:10px;height:1px;background:#ababab"></div>
<div class="t" style="left:-0.67px;top:848px;font-size:10.3px;line-height:10.3px;color:#000;transform:scaleX(0.8500);-webkit-text-stroke:0.1px #000;">6</div>
<div class="r" style="left:0px;top:870px;width:10px;height:1px;background:#ababab"></div>
<div class="t" style="left:-0.67px;top:860px;font-size:10.3px;line-height:10.3px;color:#000;transform:scaleX(0.8500);-webkit-text-stroke:0.1px #000;">7</div>
<div class="r" style="left:0px;top:882px;width:10px;height:1px;background:#ababab"></div>
<div class="t" style="left:-0.67px;top:872px;font-size:10.3px;line-height:10.3px;color:#000;transform:scaleX(0.8500);-webkit-text-stroke:0.1px #000;">8</div>
<div class="r" style="left:0px;top:894px;width:10px;height:1px;background:#ababab"></div>
<div class="t" style="left:-0.67px;top:884px;font-size:10.3px;line-height:10.3px;color:#000;transform:scaleX(0.8500);-webkit-text-stroke:0.1px #000;">9</div>
<div class="r" style="left:0px;top:906px;width:10px;height:1px;background:#ababab"></div>
<div class="t" style="left:-0.67px;top:896px;font-size:10.3px;line-height:10.3px;color:#000;transform:scaleX(0.8500);-webkit-text-stroke:0.1px #000;">0</div>
<div class="r" style="left:0px;top:918px;width:10px;height:1px;background:#ababab"></div>
<div class="t" style="left:-0.67px;top:908px;font-size:10.3px;line-height:10.3px;color:#000;transform:scaleX(0.8500);-webkit-text-stroke:0.1px #000;">1</div>
<div class="r" style="left:0px;top:930px;width:10px;height:1px;background:#ababab"></div>
<div class="t" style="left:-0.67px;top:920px;font-size:10.3px;line-height:10.3px;color:#000;transform:scaleX(0.8500);-webkit-text-stroke:0.1px #000;">2</div>
<div class="r" style="left:0px;top:942px;width:10px;height:1px;background:#ababab"></div>
<div class="t" style="left:-0.67px;top:932px;font-size:10.3px;line-height:10.3px;color:#000;transform:scaleX(0.8500);-webkit-text-stroke:0.1px #000;">3</div>
<div class="r" style="left:0px;top:954px;width:10px;height:1px;background:#ababab"></div>
<div class="t" style="left:-0.67px;top:944px;font-size:10.3px;line-height:10.3px;color:#000;transform:scaleX(0.8500);-webkit-text-stroke:0.1px #000;">4</div>
<div class="t" style="left:13.50px;top:200px;font-size:10.3px;line-height:10.3px;color:#000;transform:scaleX(0.8975);-webkit-text-stroke:0.2px #000;">INPUT YARN WEIGHT=PRODUCED ELASTIC WEIGHT+ALTERATION WEIGHT+TOTAL EXCESS YARN WEIGHT+BEAM GAITING WASTE+PRODUCTION WASTE</div>
<div class="r" style="left:11px;top:282px;width:63px;height:13px;background:#ffc000"></div>
<div class="t" style="left:40.04px;top:224px;font-size:10.3px;line-height:10.3px;color:#000;transform:scaleX(0.8450);-webkit-text-stroke:0.2px #000;">698.768</div>
<div class="t" style="left:54.56px;top:236px;font-size:10.3px;line-height:10.3px;color:#000;transform:scaleX(0.8450);-webkit-text-stroke:0.2px #000;">3.87</div>
<div class="t" style="left:49.72px;top:248px;font-size:10.3px;line-height:10.3px;color:#000;transform:scaleX(0.8450);-webkit-text-stroke:0.2px #000;">13.01</div>
<div class="t" style="left:50.37px;top:260px;font-size:10.3px;line-height:10.3px;color:#000;transform:scaleX(0.8450);-webkit-text-stroke:0.2px #000;">8.118</div>
<div class="t" style="left:44.88px;top:272px;font-size:10.3px;line-height:10.3px;color:#000;transform:scaleX(0.8450);-webkit-text-stroke:0.2px #000;">16.895</div>
<div class="t" style="left:40.04px;top:284px;font-size:10.3px;line-height:10.3px;color:#000;transform:scaleX(0.8450);-webkit-text-stroke:0.2px #000;">740.661</div>
<div class="r" style="left:11px;top:294px;width:1267px;height:25px;background:#92d050"></div>
<div class="r" style="left:523px;top:318px;width:41px;height:337px;background:#92d050"></div>
<div class="r" style="left:11px;top:630px;width:553px;height:25px;background:#92d050"></div>
<div class="r" style="left:1050px;top:318px;width:228px;height:337px;background:#92d050"></div>
<div class="r" style="left:443px;top:654px;width:41px;height:85px;background:#92d050"></div>
<div class="r" style="left:443px;top:714px;width:158px;height:25px;background:#92d050"></div>
<div class="t" style="left:207.40px;top:301px;font-size:15.0px;line-height:15.0px;color:#000;transform:scaleX(0.9285);">BEAM LOADING ORDER</div>
<div class="t" style="left:692.20px;top:301px;font-size:15.0px;line-height:15.0px;color:#000;transform:scaleX(0.9305);">YARN USAGE ACCORDING TO BEAMS</div>
<div class="r" style="left:56.1px;top:332.2px;width:117.1px;height:51.1px;border:1.4px solid #2f528f;border-radius:9px"></div>
<div class="r" style="left:73.4px;top:399.3px;width:100.8px;height:51.6px;border:1.4px solid #2f528f;border-radius:9px"></div>
<div class="r" style="left:73.1px;top:468.2px;width:101.3px;height:51.9px;border:1.4px solid #2f528f;border-radius:9px"></div>
<div class="r" style="left:55.3px;top:542.5px;width:117.3px;height:50.8px;border:1.4px solid #2f528f;border-radius:9px"></div>
<div class="r" style="left:207.3px;top:332.5px;width:148.1px;height:50.8px;border:1.4px solid #2f528f;border-radius:9px"></div>
<div class="r" style="left:207.3px;top:399.4px;width:149.0px;height:52.0px;border:1.4px solid #2f528f;border-radius:9px"></div>
<div class="r" style="left:207.0px;top:468.3px;width:149.3px;height:51.7px;border:1.4px solid #2f528f;border-radius:9px"></div>
<div class="r" style="left:208.5px;top:542.3px;width:148.7px;height:52.0px;border:1.4px solid #4472c4;border-radius:9px"></div>
<div class="r" style="left:383.3px;top:361.2px;width:66.9px;height:38.0px;border:1.4px solid #2f528f;border-radius:8px"></div>
<div class="r" style="left:368.4px;top:430.4px;width:101.2px;height:165.7px;border:1.4px solid #2f528f;border-radius:17px"></div>
<div class="t" style="left:39.61px;top:348px;font-size:10.8px;line-height:10.8px;color:#000;transform:scaleX(0.9300);">4</div>
<div class="t" style="left:39.61px;top:417px;font-size:10.8px;line-height:10.8px;color:#000;transform:scaleX(0.9300);">3</div>
<div class="t" style="left:39.61px;top:486px;font-size:10.8px;line-height:10.8px;color:#000;transform:scaleX(0.9300);">2</div>
<div class="t" style="left:39.61px;top:555px;font-size:10.8px;line-height:10.8px;color:#000;transform:scaleX(0.9300);">1</div>
<div class="t" style="left:109.73px;top:348px;font-size:10.8px;line-height:10.8px;color:#000;transform:scaleX(0.9300);">8727</div>
<div class="t" style="left:109.73px;top:363px;font-size:10.8px;line-height:10.8px;color:#000;transform:scaleX(0.9300);">8578</div>
<div class="t" style="left:109.73px;top:417px;font-size:10.8px;line-height:10.8px;color:#000;transform:scaleX(0.9300);">2889</div>
<div class="t" style="left:112.52px;top:432px;font-size:10.8px;line-height:10.8px;color:#000;transform:scaleX(0.9300);">213</div>
<div class="t" style="left:112.52px;top:486px;font-size:10.8px;line-height:10.8px;color:#000;transform:scaleX(0.9300);">431</div>
<div class="t" style="left:109.73px;top:501px;font-size:10.8px;line-height:10.8px;color:#000;transform:scaleX(0.9300);">6379</div>
<div class="t" style="left:118.11px;top:555px;font-size:10.8px;line-height:10.8px;color:#000;transform:scaleX(0.9300);">5</div>
<div class="t" style="left:112.52px;top:570px;font-size:10.8px;line-height:10.8px;color:#000;transform:scaleX(0.9300);">374</div>
<div class="t" style="left:264.93px;top:348px;font-size:10.8px;line-height:10.8px;color:#000;transform:scaleX(0.9300);">10159</div>
<div class="t" style="left:267.73px;top:363px;font-size:10.8px;line-height:10.8px;color:#000;transform:scaleX(0.9300);">8598</div>
<div class="t" style="left:270.52px;top:417px;font-size:10.8px;line-height:10.8px;color:#000;transform:scaleX(0.9300);">123</div>
<div class="t" style="left:270.52px;top:432px;font-size:10.8px;line-height:10.8px;color:#000;transform:scaleX(0.9300);">444</div>
<div class="t" style="left:270.52px;top:486px;font-size:10.8px;line-height:10.8px;color:#000;transform:scaleX(0.9300);">466</div>
<div class="t" style="left:270.52px;top:501px;font-size:10.8px;line-height:10.8px;color:#000;transform:scaleX(0.9300);">227</div>
<div class="t" style="left:270.52px;top:556px;font-size:10.8px;line-height:10.8px;color:#000;transform:scaleX(0.9300);">490</div>
<div class="t" style="left:270.52px;top:571px;font-size:10.8px;line-height:10.8px;color:#000;transform:scaleX(0.9300);">175</div>
<div class="t" style="left:412.73px;top:375px;font-size:10.8px;line-height:10.8px;color:#000;transform:scaleX(0.9300);">9617</div>
<div class="t" style="left:117.02px;top:600px;font-size:15.0px;line-height:15.0px;color:#000;transform:scaleX(0.9300);">L</div>
<div class="t" style="left:273.86px;top:601px;font-size:15.0px;line-height:15.0px;color:#000;transform:scaleX(0.9300);">R</div>
<div class="r" style="left:626px;top:360px;width:75px;height:16px;background:#4472c4"></div>
<div class="r" style="left:626px;top:375px;width:75px;height:13px;background:#d9e1f2"></div>
<div class="r" style="left:626px;top:387px;width:75px;height:1px;background:#8eaadb"></div>
<div class="r" style="left:626px;top:399px;width:75px;height:1px;background:#8eaadb"></div>
<div class="r" style="left:626px;top:399px;width:75px;height:13px;background:#d9e1f2"></div>
<div class="r" style="left:626px;top:411px;width:75px;height:1px;background:#8eaadb"></div>
<div class="r" style="left:626px;top:429px;width:75px;height:1px;background:#8eaadb"></div>
<div class="r" style="left:626px;top:429px;width:75px;height:16px;background:#d9e1f2"></div>
<div class="r" style="left:626px;top:444px;width:75px;height:1px;background:#8eaadb"></div>
<div class="r" style="left:626px;top:456px;width:75px;height:1px;background:#8eaadb"></div>
<div class="r" style="left:626px;top:456px;width:75px;height:13px;background:#d9e1f2"></div>
<div class="r" style="left:626px;top:468px;width:75px;height:1px;background:#8eaadb"></div>
<div class="r" style="left:626px;top:480px;width:75px;height:1px;background:#8eaadb"></div>
<div class="r" style="left:626px;top:480px;width:75px;height:19px;background:#d9e1f2"></div>
<div class="r" style="left:626px;top:498px;width:75px;height:1px;background:#8eaadb"></div>
<div class="r" style="left:626px;top:513px;width:75px;height:1px;background:#8eaadb"></div>
<div class="r" style="left:626px;top:375px;width:75px;height:1px;background:#8eaadb"></div>
<div class="r" style="left:626px;top:360px;width:1px;height:154px;background:#8eaadb"></div>
<div class="r" style="left:700px;top:360px;width:1px;height:154px;background:#8eaadb"></div>
<div class="r" style="left:627px;top:361px;width:28px;height:13px;overflow:hidden">
</div>
<div class="t" style="left:629.70px;top:364px;font-size:10.3px;line-height:10.3px;color:#fff;font-weight:bold;">RACK</div>
<div class="r" style="left:655.5px;top:360.5px;width:14.0px;height:14.0px;background:linear-gradient(#fbfbfb,#e9e9e9);border:1px solid #b5b5b5"></div>
<svg style="left:658.5px;top:365.0px" width="8" height="6" viewBox="0 0 8 6"><path d="M0.5 1 L7.5 1 L4 5 Z" fill="#606060"/></svg>
<div class="r" style="left:670px;top:361px;width:15px;height:13px;background:#4472c4"></div>
<div class="t" style="left:673.60px;top:364px;font-size:10.3px;line-height:10.3px;color:#fff;font-weight:bold;">USAGE</div>
<div class="r" style="left:670.5px;top:361px;width:2.5px;height:13px;background:#4472c4"></div>
<div class="r" style="left:685.2px;top:360.5px;width:14.3px;height:14.0px;background:linear-gradient(#fbfbfb,#e9e9e9);border:1px solid #b5b5b5"></div>
<svg style="left:688.4px;top:365.0px" width="8" height="6" viewBox="0 0 8 6"><path d="M0.5 1 L7.5 1 L4 5 Z" fill="#606060"/></svg>
<div class="t" style="left:629.50px;top:377px;font-size:10.3px;line-height:10.3px;color:#000;transform:scaleX(0.9800);-webkit-text-stroke:0.2px #000;">FACE1L</div>
<div class="t" style="left:676.52px;top:377px;font-size:10.3px;line-height:10.3px;color:#000;transform:scaleX(0.8450);-webkit-text-stroke:0.2px #000;">50.27</div>
<div class="t" style="left:629.00px;top:392px;font-size:6.9px;line-height:6.9px;color:#000;font-weight:bold;">FACE1R</div>
<div class="t" style="left:676.52px;top:389px;font-size:10.3px;line-height:10.3px;color:#000;transform:scaleX(0.8450);-webkit-text-stroke:0.2px #000;">50.14</div>
<div class="t" style="left:629.00px;top:404px;font-size:6.9px;line-height:6.9px;color:#000;font-weight:bold;">FACE2L</div>
<div class="t" style="left:676.52px;top:401px;font-size:10.3px;line-height:10.3px;color:#000;transform:scaleX(0.8450);-webkit-text-stroke:0.2px #000;">50.05</div>
<div class="t" style="left:629.00px;top:421px;font-size:6.9px;line-height:6.9px;color:#000;font-weight:bold;">FACE2R</div>
<div class="t" style="left:681.36px;top:418px;font-size:10.3px;line-height:10.3px;color:#000;transform:scaleX(0.8450);-webkit-text-stroke:0.2px #000;">50.1</div>
<div class="t" style="left:629.00px;top:436px;font-size:6.9px;line-height:6.9px;color:#000;font-weight:bold;">BACK3L</div>
<div class="t" style="left:676.52px;top:433px;font-size:10.3px;line-height:10.3px;color:#000;transform:scaleX(0.8450);-webkit-text-stroke:0.2px #000;">48.73</div>
<div class="t" style="left:629.00px;top:449px;font-size:6.9px;line-height:6.9px;color:#000;font-weight:bold;">BACK3R</div>
<div class="t" style="left:688.62px;top:446px;font-size:10.3px;line-height:10.3px;color:#000;transform:scaleX(0.8450);-webkit-text-stroke:0.2px #000;">48</div>
<div class="t" style="left:629.00px;top:461px;font-size:6.9px;line-height:6.9px;color:#000;font-weight:bold;">BINDER4L</div>
<div class="t" style="left:676.52px;top:458px;font-size:10.3px;line-height:10.3px;color:#000;transform:scaleX(0.8450);-webkit-text-stroke:0.2px #000;">23.08</div>
<div class="t" style="left:629.00px;top:473px;font-size:6.9px;line-height:6.9px;color:#000;font-weight:bold;">BINDER4R</div>
<div class="t" style="left:676.52px;top:470px;font-size:10.3px;line-height:10.3px;color:#000;transform:scaleX(0.8450);-webkit-text-stroke:0.2px #000;">23.58</div>
<div class="t" style="left:629.00px;top:490px;font-size:6.9px;line-height:6.9px;color:#000;font-weight:bold;">EDGE</div>
<div class="t" style="left:681.36px;top:487px;font-size:10.3px;line-height:10.3px;color:#000;transform:scaleX(0.8450);-webkit-text-stroke:0.2px #000;">1.98</div>
<div class="t" style="left:629.00px;top:505px;font-size:6.9px;line-height:6.9px;color:#000;font-weight:bold;">RUBBER</div>
<div class="t" style="left:676.52px;top:502px;font-size:10.3px;line-height:10.3px;color:#000;transform:scaleX(0.8450);-webkit-text-stroke:0.2px #000;">245.5</div>
<svg style="left:696px;top:509px" width="4" height="4" viewBox="0 0 4 4"><path d="M4 0 L4 4 L0 4 Z" fill="#4472c4"/></svg>
<div class="r" style="left:742px;top:360px;width:125px;height:16px;background:#d9e1f2"></div>
<div class="r" style="left:742px;top:375px;width:125px;height:1px;background:#8eaadb"></div>
<div class="r" style="left:743px;top:376px;width:123px;height:23px;background:#fff"></div>
<div class="t" style="left:745.70px;top:364px;font-size:10.3px;line-height:10.3px;color:#000;font-weight:bold;transform:scaleX(1.0200);">Row Lab</div>
<div class="r" style="left:788.2px;top:361.3px;width:14.2px;height:13.3px;background:linear-gradient(#fbfbfb,#e9e9e9);border:1px solid #b5b5b5"></div>
<svg style="left:789.3px;top:363.5px" width="12" height="9" viewBox="0 0 12 9"><path d="M0.5 4 L5 4 L2.75 7 Z" fill="#555"/><path d="M5 1 L11.5 1 L9 4 L9 8 L7.5 8 L7.5 4 Z" fill="#555"/></svg>
<div class="t" style="left:807.00px;top:364px;font-size:10.3px;line-height:10.3px;color:#000;font-weight:bold;transform:scaleX(1.0081);">Sum of USAGE</div>
<div class="t" style="left:745.70px;top:377px;font-size:10.3px;line-height:10.3px;color:#000;transform:scaleX(0.9214);-webkit-text-stroke:0.2px #000;">BACK3L</div>
<div class="t" style="left:842.62px;top:377px;font-size:10.3px;line-height:10.3px;color:#000;transform:scaleX(0.8450);-webkit-text-stroke:0.2px #000;">48.73</div>
<div class="t" style="left:745.70px;top:389px;font-size:10.3px;line-height:10.3px;color:#000;transform:scaleX(0.9098);-webkit-text-stroke:0.2px #000;">BACK3R</div>
<div class="t" style="left:854.72px;top:389px;font-size:10.3px;line-height:10.3px;color:#000;transform:scaleX(0.8450);-webkit-text-stroke:0.2px #000;">48</div>
<div class="r" style="left:11px;top:654px;width:157px;height:13px;background:#4472c4"></div>
<div class="r" style="left:11px;top:666px;width:157px;height:13px;background:#d9e1f2"></div>
<div class="r" style="left:11px;top:678px;width:157px;height:1px;background:#8eaadb"></div>
<div class="r" style="left:11px;top:690px;width:157px;height:1px;background:#8eaadb"></div>
<div class="r" style="left:11px;top:690px;width:157px;height:13px;background:#d9e1f2"></div>
<div class="r" style="left:11px;top:702px;width:157px;height:1px;background:#8eaadb"></div>
<div class="r" style="left:11px;top:714px;width:157px;height:1px;background:#8eaadb"></div>
<div class="r" style="left:11px;top:714px;width:157px;height:13px;background:#d9e1f2"></div>
<div class="r" style="left:11px;top:726px;width:157px;height:1px;background:#8eaadb"></div>
<div class="r" style="left:11px;top:738px;width:157px;height:1px;background:#8eaadb"></div>
<div class="r" style="left:11px;top:666px;width:157px;height:1px;background:#8eaadb"></div>
<div class="r" style="left:167px;top:654px;width:1px;height:85px;background:#8eaadb"></div>
<div class="t" style="left:11.00px;top:655px;font-size:10.8px;line-height:10.8px;color:#fff;font-weight:bold;">YRAN TYPE</div>
<div class="r" style="left:61px;top:655px;width:12px;height:10px;background:#4472c4"></div>
<div class="r" style="left:61.0px;top:654.3px;width:11.6px;height:11.5px;background:linear-gradient(#fbfbfb,#e9e9e9);border:1px solid #b5b5b5"></div>
<svg style="left:63.8px;top:658.0px" width="6" height="5" viewBox="0 0 6 5"><path d="M0.5 1 L5.5 1 L3 4 Z" fill="#777"/></svg>
<div class="t" style="left:76.70px;top:655px;font-size:10.6px;line-height:10.6px;color:#fff;font-weight:bold;">CALC</div>
<div class="r" style="left:108.0px;top:654.3px;width:11.6px;height:11.5px;background:linear-gradient(#fbfbfb,#e9e9e9);border:1px solid #b5b5b5"></div>
<svg style="left:110.8px;top:658.0px" width="6" height="5" viewBox="0 0 6 5"><path d="M0.5 1 L5.5 1 L3 4 Z" fill="#777"/></svg>
<div class="t" style="left:123.60px;top:655px;font-size:10.6px;line-height:10.6px;color:#fff;font-weight:bold;">SPEC</div>
<div class="r" style="left:155.0px;top:654.3px;width:11.6px;height:11.5px;background:linear-gradient(#fbfbfb,#e9e9e9);border:1px solid #b5b5b5"></div>
<svg style="left:157.8px;top:658.0px" width="6" height="5" viewBox="0 0 6 5"><path d="M0.5 1 L5.5 1 L3 4 Z" fill="#777"/></svg>
<div class="r" style="left:11px;top:667px;width:62px;height:11px;overflow:hidden">
<div class="t" style="left:-1.20px;top:1px;font-size:10.3px;line-height:10.3px;color:#000;transform:scaleX(0.8800);-webkit-text-stroke:0.2px #000;">AM USAGE PE</div>
</div>
<div class="t" style="left:81.60px;top:668px;font-size:10.3px;line-height:10.3px;color:#000;transform:scaleX(0.8450);-webkit-text-stroke:0.2px #000;">3.898377</div>
<div class="t" style="left:148.16px;top:668px;font-size:10.3px;line-height:10.3px;color:#000;transform:scaleX(0.8450);-webkit-text-stroke:0.2px #000;">4.19</div>
<div class="r" style="left:11px;top:679px;width:62px;height:11px;overflow:hidden">
<div class="t" style="left:-1.20px;top:1px;font-size:10.3px;line-height:10.3px;color:#000;transform:scaleX(0.8800);-webkit-text-stroke:0.2px #000;">AM USAGE PE</div>
</div>
<div class="t" style="left:81.60px;top:680px;font-size:10.3px;line-height:10.3px;color:#000;transform:scaleX(0.8450);-webkit-text-stroke:0.2px #000;">1.880186</div>
<div class="t" style="left:153.00px;top:680px;font-size:10.3px;line-height:10.3px;color:#000;transform:scaleX(0.8450);-webkit-text-stroke:0.2px #000;">2.1</div>
<div class="r" style="left:11px;top:691px;width:62px;height:11px;overflow:hidden">
<div class="t" style="left:-1.20px;top:1px;font-size:10.3px;line-height:10.3px;color:#000;transform:scaleX(0.8800);-webkit-text-stroke:0.2px #000;">EAM USAGE P</div>
</div>
<div class="t" style="left:81.60px;top:692px;font-size:10.3px;line-height:10.3px;color:#000;transform:scaleX(0.8450);-webkit-text-stroke:0.2px #000;">0.906952</div>
<div class="t" style="left:148.16px;top:692px;font-size:10.3px;line-height:10.3px;color:#000;transform:scaleX(0.8450);-webkit-text-stroke:0.2px #000;">0.99</div>
<div class="r" style="left:11px;top:703px;width:62px;height:11px;overflow:hidden">
<div class="t" style="left:-1.20px;top:1px;font-size:10.3px;line-height:10.3px;color:#000;transform:scaleX(0.8800);-webkit-text-stroke:0.2px #000;">EAM USAGE F</div>
</div>
<div class="t" style="left:81.60px;top:704px;font-size:10.3px;line-height:10.3px;color:#000;transform:scaleX(0.8450);-webkit-text-stroke:0.2px #000;">4.771703</div>
<div class="t" style="left:148.16px;top:704px;font-size:10.3px;line-height:10.3px;color:#000;transform:scaleX(0.8450);-webkit-text-stroke:0.2px #000;">4.59</div>
<div class="r" style="left:11px;top:715px;width:62px;height:11px;overflow:hidden">
<div class="t" style="left:-1.20px;top:1px;font-size:10.3px;line-height:10.3px;color:#000;transform:scaleX(0.8800);-webkit-text-stroke:0.2px #000;">AM USAGE PE</div>
</div>
<div class="t" style="left:81.60px;top:716px;font-size:10.3px;line-height:10.3px;color:#000;transform:scaleX(0.8450);-webkit-text-stroke:0.2px #000;">0.038486</div>
<div class="t" style="left:148.16px;top:716px;font-size:10.3px;line-height:10.3px;color:#000;transform:scaleX(0.8450);-webkit-text-stroke:0.2px #000;">0.04</div>
<div class="r" style="left:11px;top:727px;width:62px;height:11px;overflow:hidden">
<div class="t" style="left:-1.20px;top:1px;font-size:10.3px;line-height:10.3px;color:#000;transform:scaleX(0.8800);-webkit-text-stroke:0.2px #000;">EFT USAGE PE</div>
</div>
<div class="t" style="left:100.96px;top:728px;font-size:10.3px;line-height:10.3px;color:#000;transform:scaleX(0.8450);-webkit-text-stroke:0.2px #000;">2.62</div>
<div class="t" style="left:148.16px;top:728px;font-size:10.3px;line-height:10.3px;color:#000;transform:scaleX(0.8450);-webkit-text-stroke:0.2px #000;">2.98</div>
<svg style="left:163px;top:734px" width="4" height="4" viewBox="0 0 4 4"><path d="M4 0 L4 4 L0 4 Z" fill="#4472c4"/></svg>
<div class="r" style="left:207px;top:654px;width:197px;height:13px;background:#d9e1f2"></div>
<div class="r" style="left:207px;top:666px;width:197px;height:1px;background:#8eaadb"></div>
<div class="r" style="left:208px;top:667px;width:195px;height:71px;background:#fff"></div>
<div class="r" style="left:207px;top:738px;width:197px;height:13px;background:#d9e1f2"></div>
<div class="r" style="left:207px;top:738px;width:197px;height:1px;background:#8eaadb"></div>
<div class="t" style="left:210.50px;top:656px;font-size:10.3px;line-height:10.3px;color:#000;font-weight:bold;transform:scaleX(1.0046);">Row Labels</div>
<div class="r" style="left:281.0px;top:654.3px;width:11.6px;height:11.5px;background:linear-gradient(#fbfbfb,#e9e9e9);border:1px solid #b5b5b5"></div>
<svg style="left:283.8px;top:658.0px" width="6" height="5" viewBox="0 0 6 5"><path d="M0.5 1 L5.5 1 L3 4 Z" fill="#777"/></svg>
<div class="r" style="left:293px;top:655px;width:56px;height:11px;overflow:hidden">
<div class="t" style="left:3.70px;top:1px;font-size:10.3px;line-height:10.3px;color:#000;font-weight:bold;transform:scaleX(1.0400);">Sum of CALC</div>
</div>
<div class="t" style="left:352.60px;top:656px;font-size:10.3px;line-height:10.3px;color:#000;font-weight:bold;transform:scaleX(1.0408);">Sum of SPEC</div>
<div class="r" style="left:208px;top:666px;width:85px;height:12px;overflow:hidden">
<div class="t" style="left:2.50px;top:2px;font-size:10.3px;line-height:10.3px;color:#000;transform:scaleX(0.8800);-webkit-text-stroke:0.2px #000;">BACK BEAM USAGE</div>
</div>
<div class="t" style="left:330.46px;top:668px;font-size:10.3px;line-height:10.3px;color:#000;transform:scaleX(0.8450);-webkit-text-stroke:0.2px #000;">1.88</div>
<div class="t" style="left:388.90px;top:668px;font-size:10.3px;line-height:10.3px;color:#000;transform:scaleX(0.8450);-webkit-text-stroke:0.2px #000;">2.1</div>
<div class="r" style="left:208px;top:678px;width:85px;height:12px;overflow:hidden">
<div class="t" style="left:2.50px;top:2px;font-size:10.3px;line-height:10.3px;color:#000;transform:scaleX(0.8800);-webkit-text-stroke:0.2px #000;">BINDER BEAM USAGE</div>
</div>
<div class="t" style="left:330.46px;top:680px;font-size:10.3px;line-height:10.3px;color:#000;transform:scaleX(0.8450);-webkit-text-stroke:0.2px #000;">0.91</div>
<div class="t" style="left:384.06px;top:680px;font-size:10.3px;line-height:10.3px;color:#000;transform:scaleX(0.8450);-webkit-text-stroke:0.2px #000;">0.99</div>
<div class="r" style="left:208px;top:690px;width:85px;height:12px;overflow:hidden">
<div class="t" style="left:2.50px;top:2px;font-size:10.3px;line-height:10.3px;color:#000;transform:scaleX(0.8800);-webkit-text-stroke:0.2px #000;">EDGE BEAM USAGE</div>
</div>
<div class="t" style="left:330.46px;top:692px;font-size:10.3px;line-height:10.3px;color:#000;transform:scaleX(0.8450);-webkit-text-stroke:0.2px #000;">0.04</div>
<div class="t" style="left:384.06px;top:692px;font-size:10.3px;line-height:10.3px;color:#000;transform:scaleX(0.8450);-webkit-text-stroke:0.2px #000;">0.04</div>
<div class="r" style="left:208px;top:702px;width:85px;height:12px;overflow:hidden">
<div class="t" style="left:2.50px;top:2px;font-size:10.3px;line-height:10.3px;color:#000;transform:scaleX(0.8800);-webkit-text-stroke:0.2px #000;">FACE BEAM USAGE</div>
</div>
<div class="t" style="left:330.46px;top:704px;font-size:10.3px;line-height:10.3px;color:#000;transform:scaleX(0.8450);-webkit-text-stroke:0.2px #000;">3.90</div>
<div class="t" style="left:384.06px;top:704px;font-size:10.3px;line-height:10.3px;color:#000;transform:scaleX(0.8450);-webkit-text-stroke:0.2px #000;">4.19</div>
<div class="r" style="left:208px;top:714px;width:85px;height:12px;overflow:hidden">
<div class="t" style="left:2.50px;top:2px;font-size:10.3px;line-height:10.3px;color:#000;transform:scaleX(0.8800);-webkit-text-stroke:0.2px #000;">RUBBER BEAM USAGE</div>
</div>
<div class="t" style="left:330.46px;top:716px;font-size:10.3px;line-height:10.3px;color:#000;transform:scaleX(0.8450);-webkit-text-stroke:0.2px #000;">4.77</div>
<div class="t" style="left:384.06px;top:716px;font-size:10.3px;line-height:10.3px;color:#000;transform:scaleX(0.8450);-webkit-text-stroke:0.2px #000;">4.59</div>
<div class="r" style="left:208px;top:726px;width:85px;height:12px;overflow:hidden">
<div class="t" style="left:2.50px;top:2px;font-size:10.3px;line-height:10.3px;color:#000;transform:scaleX(0.8800);-webkit-text-stroke:0.2px #000;">TOTAL WEFT USAGE</div>
</div>
<div class="t" style="left:330.46px;top:728px;font-size:10.3px;line-height:10.3px;color:#000;transform:scaleX(0.8450);-webkit-text-stroke:0.2px #000;">2.55</div>
<div class="t" style="left:384.06px;top:728px;font-size:10.3px;line-height:10.3px;color:#000;transform:scaleX(0.8450);-webkit-text-stroke:0.2px #000;">2.98</div>
<div class="t" style="left:210.50px;top:740px;font-size:10.3px;line-height:10.3px;color:#000;font-weight:bold;transform:scaleX(1.0520);">Grand Total</div>
<div class="t" style="left:320.59px;top:740px;font-size:10.3px;line-height:10.3px;color:#000;font-weight:bold;transform:scaleX(1.0400);">14.05</div>
<div class="t" style="left:374.19px;top:740px;font-size:10.3px;line-height:10.3px;color:#000;font-weight:bold;transform:scaleX(1.0400);">14.89</div>
<div class="r" style="left:563px;top:786px;width:865px;height:13px;background:#d9e1f2"></div>
<div class="r" style="left:563px;top:798px;width:865px;height:1px;background:#8eaadb"></div>
<div class="t" style="left:566.70px;top:788px;font-size:10.3px;line-height:10.3px;color:#000;font-weight:bold;transform:scaleX(1.0460);">Months</div>
<div class="r" style="left:614.0px;top:786.3px;width:11.6px;height:11.5px;background:linear-gradient(#fbfbfb,#e9e9e9);border:1px solid #b5b5b5"></div>
<svg style="left:616.8px;top:790.0px" width="6" height="5" viewBox="0 0 6 5"><path d="M0.5 1 L5.5 1 L3 4 Z" fill="#777"/></svg>
<div class="r" style="left:627px;top:787px;width:31px;height:11px;overflow:hidden">
<div class="t" style="left:2.90px;top:1px;font-size:10.3px;line-height:10.3px;color:#000;font-weight:bold;transform:scaleX(1.0400);">DATE</div>
</div>
<div class="r" style="left:658.3px;top:786.3px;width:11.3px;height:11.5px;background:linear-gradient(#fbfbfb,#e9e9e9);border:1px solid #b5b5b5"></div>
<svg style="left:661.0px;top:790.0px" width="6" height="5" viewBox="0 0 6 5"><path d="M0.5 1 L5.5 1 L3 4 Z" fill="#777"/></svg>
<div class="r" style="left:671px;top:787px;width:17px;height:11px;overflow:hidden">
<div class="t" style="left:2.30px;top:1px;font-size:10.3px;line-height:10.3px;color:#000;font-weight:bold;transform:scaleX(1.0400);">D/N</div>
</div>
<div class="r" style="left:688.0px;top:786.3px;width:11.4px;height:11.5px;background:linear-gradient(#fbfbfb,#e9e9e9);border:1px solid #b5b5b5"></div>
<svg style="left:690.7px;top:790.0px" width="6" height="5" viewBox="0 0 6 5"><path d="M0.5 1 L5.5 1 L3 4 Z" fill="#777"/></svg>
<div class="r" style="left:700px;top:787px;width:41px;height:11px;overflow:hidden">
<div class="t" style="left:3.00px;top:1px;font-size:10.3px;line-height:10.3px;color:#000;font-weight:bold;transform:scaleX(1.0400);">Sum of</div>
</div>
<div class="r" style="left:742px;top:787px;width:60px;height:11px;overflow:hidden">
<div class="t" style="left:3.00px;top:1px;font-size:10.3px;line-height:10.3px;color:#000;font-weight:bold;transform:scaleX(1.0400);">Sum of 1R</div>
</div>
<div class="r" style="left:803px;top:787px;width:62px;height:11px;overflow:hidden">
<div class="t" style="left:3.00px;top:1px;font-size:10.3px;line-height:10.3px;color:#000;font-weight:bold;transform:scaleX(1.0400);">Sum of 2L</div>
</div>
<div class="r" style="left:866px;top:787px;width:42px;height:11px;overflow:hidden">
<div class="t" style="left:3.00px;top:1px;font-size:10.3px;line-height:10.3px;color:#000;font-weight:bold;transform:scaleX(1.0400);">Sum of</div>
</div>
<div class="r" style="left:909px;top:787px;width:41px;height:11px;overflow:hidden">
<div class="t" style="left:3.00px;top:1px;font-size:10.3px;line-height:10.3px;color:#000;font-weight:bold;transform:scaleX(1.0400);">Sum of</div>
</div>
<div class="r" style="left:951px;top:787px;width:60px;height:11px;overflow:hidden">
<div class="t" style="left:3.00px;top:1px;font-size:10.3px;line-height:10.3px;color:#000;font-weight:bold;transform:scaleX(1.0400);">Sum of 3R</div>
</div>
<div class="r" style="left:1012px;top:787px;width:37px;height:11px;overflow:hidden">
<div class="t" style="left:3.00px;top:1px;font-size:10.3px;line-height:10.3px;color:#000;font-weight:bold;transform:scaleX(1.0400);">Sum of</div>
</div>
<div class="t" style="left:1053.70px;top:788px;font-size:10.3px;line-height:10.3px;color:#000;font-weight:bold;transform:scaleX(1.0400);">Sum of 4R</div>
<div class="r" style="left:1277px;top:787px;width:41px;height:11px;overflow:hidden">
<div class="t" style="left:3.00px;top:1px;font-size:10.3px;line-height:10.3px;color:#000;font-weight:bold;transform:scaleX(1.0400);">Sum of</div>
</div>
<div class="r" style="left:1319px;top:787px;width:42px;height:11px;overflow:hidden">
<div class="t" style="left:3.00px;top:1px;font-size:10.3px;line-height:10.3px;color:#000;font-weight:bold;transform:scaleX(1.0400);">Sum of</div>
</div>
<div class="t" style="left:1365.50px;top:788px;font-size:10.3px;line-height:10.3px;color:#000;font-weight:bold;transform:scaleX(1.0400);">Sum of RUBBER</div>
<div class="r" style="left:568.0px;top:800.5px;width:7px;height:7px;border:1px solid #9aa6b8;background:#f4f6fa"></div>
<div class="r" style="left:569.5px;top:803.5px;width:4px;height:1px;background:#4a5a78"></div>
<div class="r" style="left:630.8px;top:800.5px;width:7px;height:7px;border:1px solid #9aa6b8;background:#f4f6fa"></div>
<div class="r" style="left:632.3px;top:803.5px;width:4px;height:1px;background:#4a5a78"></div>
<div class="t" style="left:578.20px;top:800px;font-size:10.3px;line-height:10.3px;color:#000;font-weight:bold;transform:scaleX(1.0400);">Aug</div>
<div class="r" style="left:639px;top:798px;width:31px;height:11px;overflow:hidden">
<div class="t" style="left:1.40px;top:2px;font-size:10.3px;line-height:10.3px;color:#000;font-weight:bold;transform:scaleX(1.0400);">19-Au</div>
</div>
<div class="t" style="left:673.90px;top:800px;font-size:10.3px;line-height:10.3px;color:#000;transform:scaleX(0.8800);-webkit-text-stroke:0.2px #000;">D</div>
<div class="t" style="left:730.32px;top:800px;font-size:10.3px;line-height:10.3px;color:#000;transform:scaleX(0.8450);-webkit-text-stroke:0.2px #000;">61</div>
<div class="t" style="left:791.22px;top:800px;font-size:10.3px;line-height:10.3px;color:#000;transform:scaleX(0.8450);-webkit-text-stroke:0.2px #000;">62</div>
<div class="t" style="left:854.42px;top:800px;font-size:10.3px;line-height:10.3px;color:#000;transform:scaleX(0.8450);-webkit-text-stroke:0.2px #000;">61</div>
<div class="t" style="left:897.62px;top:800px;font-size:10.3px;line-height:10.3px;color:#000;transform:scaleX(0.8450);-webkit-text-stroke:0.2px #000;">61</div>
<div class="t" style="left:939.62px;top:800px;font-size:10.3px;line-height:10.3px;color:#000;transform:scaleX(0.8450);-webkit-text-stroke:0.2px #000;">59</div>
<div class="t" style="left:1000.52px;top:800px;font-size:10.3px;line-height:10.3px;color:#000;transform:scaleX(0.8450);-webkit-text-stroke:0.2px #000;">60</div>
<div class="t" style="left:1038.62px;top:800px;font-size:10.3px;line-height:10.3px;color:#000;transform:scaleX(0.8450);-webkit-text-stroke:0.2px #000;">50</div>
<div class="t" style="left:1265.12px;top:800px;font-size:10.3px;line-height:10.3px;color:#000;transform:scaleX(0.8450);-webkit-text-stroke:0.2px #000;">47</div>
<div class="t" style="left:1307.12px;top:800px;font-size:10.3px;line-height:10.3px;color:#000;transform:scaleX(0.8450);-webkit-text-stroke:0.2px #000;">60</div>
<div class="t" style="left:1350.32px;top:800px;font-size:10.3px;line-height:10.3px;color:#000;transform:scaleX(0.8450);-webkit-text-stroke:0.2px #000;">61</div>
<div class="t" style="left:1415.22px;top:800px;font-size:10.3px;line-height:10.3px;color:#000;transform:scaleX(0.8450);-webkit-text-stroke:0.2px #000;">77</div>
<div class="t" style="left:578.20px;top:812px;font-size:10.3px;line-height:10.3px;color:#000;font-weight:bold;transform:scaleX(1.0400);">Aug</div>
<div class="r" style="left:639px;top:810px;width:31px;height:11px;overflow:hidden">
<div class="t" style="left:1.40px;top:2px;font-size:10.3px;line-height:10.3px;color:#000;font-weight:bold;transform:scaleX(1.0400);">19-Au</div>
</div>
<div class="t" style="left:673.90px;top:812px;font-size:10.3px;line-height:10.3px;color:#000;transform:scaleX(0.8800);-webkit-text-stroke:0.2px #000;">N</div>
<div class="t" style="left:730.32px;top:812px;font-size:10.3px;line-height:10.3px;color:#000;transform:scaleX(0.8450);-webkit-text-stroke:0.2px #000;">60</div>
<div class="t" style="left:791.22px;top:812px;font-size:10.3px;line-height:10.3px;color:#000;transform:scaleX(0.8450);-webkit-text-stroke:0.2px #000;">60</div>
<div class="t" style="left:854.42px;top:812px;font-size:10.3px;line-height:10.3px;color:#000;transform:scaleX(0.8450);-webkit-text-stroke:0.2px #000;">60</div>
<div class="t" style="left:897.62px;top:812px;font-size:10.3px;line-height:10.3px;color:#000;transform:scaleX(0.8450);-webkit-text-stroke:0.2px #000;">60</div>
<div class="t" style="left:939.62px;top:812px;font-size:10.3px;line-height:10.3px;color:#000;transform:scaleX(0.8450);-webkit-text-stroke:0.2px #000;">60</div>
<div class="t" style="left:1000.52px;top:812px;font-size:10.3px;line-height:10.3px;color:#000;transform:scaleX(0.8450);-webkit-text-stroke:0.2px #000;">62</div>
<div class="t" style="left:1038.62px;top:812px;font-size:10.3px;line-height:10.3px;color:#000;transform:scaleX(0.8450);-webkit-text-stroke:0.2px #000;">55</div>
<div class="t" style="left:1265.12px;top:812px;font-size:10.3px;line-height:10.3px;color:#000;transform:scaleX(0.8450);-webkit-text-stroke:0.2px #000;">55</div>
<div class="t" style="left:1307.12px;top:812px;font-size:10.3px;line-height:10.3px;color:#000;transform:scaleX(0.8450);-webkit-text-stroke:0.2px #000;">60</div>
<div class="t" style="left:1350.32px;top:812px;font-size:10.3px;line-height:10.3px;color:#000;transform:scaleX(0.8450);-webkit-text-stroke:0.2px #000;">60</div>
<div class="t" style="left:1415.22px;top:812px;font-size:10.3px;line-height:10.3px;color:#000;transform:scaleX(0.8450);-webkit-text-stroke:0.2px #000;">80</div>
<div class="r" style="left:568.0px;top:824.5px;width:7px;height:7px;border:1px solid #9aa6b8;background:#f4f6fa"></div>
<div class="r" style="left:569.5px;top:827.5px;width:4px;height:1px;background:#4a5a78"></div>
<div class="r" style="left:630.8px;top:824.5px;width:7px;height:7px;border:1px solid #9aa6b8;background:#f4f6fa"></div>
<div class="r" style="left:632.3px;top:827.5px;width:4px;height:1px;background:#4a5a78"></div>
<div class="t" style="left:578.20px;top:824px;font-size:10.3px;line-height:10.3px;color:#000;font-weight:bold;transform:scaleX(1.0400);">Aug</div>
<div class="r" style="left:639px;top:822px;width:31px;height:11px;overflow:hidden">
<div class="t" style="left:1.40px;top:2px;font-size:10.3px;line-height:10.3px;color:#000;font-weight:bold;transform:scaleX(1.0400);">20-Au</div>
</div>
<div class="t" style="left:673.90px;top:824px;font-size:10.3px;line-height:10.3px;color:#000;transform:scaleX(0.8800);-webkit-text-stroke:0.2px #000;">D</div>
<div class="t" style="left:730.32px;top:824px;font-size:10.3px;line-height:10.3px;color:#000;transform:scaleX(0.8450);-webkit-text-stroke:0.2px #000;">63</div>
<div class="t" style="left:791.22px;top:824px;font-size:10.3px;line-height:10.3px;color:#000;transform:scaleX(0.8450);-webkit-text-stroke:0.2px #000;">63</div>
<div class="t" style="left:854.42px;top:824px;font-size:10.3px;line-height:10.3px;color:#000;transform:scaleX(0.8450);-webkit-text-stroke:0.2px #000;">63</div>
<div class="t" style="left:897.62px;top:824px;font-size:10.3px;line-height:10.3px;color:#000;transform:scaleX(0.8450);-webkit-text-stroke:0.2px #000;">63</div>
<div class="t" style="left:939.62px;top:824px;font-size:10.3px;line-height:10.3px;color:#000;transform:scaleX(0.8450);-webkit-text-stroke:0.2px #000;">62</div>
<div class="t" style="left:1000.52px;top:824px;font-size:10.3px;line-height:10.3px;color:#000;transform:scaleX(0.8450);-webkit-text-stroke:0.2px #000;">63</div>
<div class="t" style="left:1038.62px;top:824px;font-size:10.3px;line-height:10.3px;color:#000;transform:scaleX(0.8450);-webkit-text-stroke:0.2px #000;">55</div>
<div class="t" style="left:1265.12px;top:824px;font-size:10.3px;line-height:10.3px;color:#000;transform:scaleX(0.8450);-webkit-text-stroke:0.2px #000;">55</div>
<div class="t" style="left:1307.12px;top:824px;font-size:10.3px;line-height:10.3px;color:#000;transform:scaleX(0.8450);-webkit-text-stroke:0.2px #000;">60</div>
<div class="t" style="left:1350.32px;top:824px;font-size:10.3px;line-height:10.3px;color:#000;transform:scaleX(0.8450);-webkit-text-stroke:0.2px #000;">60</div>
<div class="t" style="left:1415.22px;top:824px;font-size:10.3px;line-height:10.3px;color:#000;transform:scaleX(0.8450);-webkit-text-stroke:0.2px #000;">80</div>
<div class="t" style="left:578.20px;top:836px;font-size:10.3px;line-height:10.3px;color:#000;font-weight:bold;transform:scaleX(1.0400);">Aug</div>
<div class="r" style="left:639px;top:834px;width:31px;height:11px;overflow:hidden">
<div class="t" style="left:1.40px;top:2px;font-size:10.3px;line-height:10.3px;color:#000;font-weight:bold;transform:scaleX(1.0400);">20-Au</div>
</div>
<div class="t" style="left:673.90px;top:836px;font-size:10.3px;line-height:10.3px;color:#000;transform:scaleX(0.8800);-webkit-text-stroke:0.2px #000;">N</div>
<div class="t" style="left:730.32px;top:836px;font-size:10.3px;line-height:10.3px;color:#000;transform:scaleX(0.8450);-webkit-text-stroke:0.2px #000;">62</div>
<div class="t" style="left:791.22px;top:836px;font-size:10.3px;line-height:10.3px;color:#000;transform:scaleX(0.8450);-webkit-text-stroke:0.2px #000;">63</div>
<div class="t" style="left:854.42px;top:836px;font-size:10.3px;line-height:10.3px;color:#000;transform:scaleX(0.8450);-webkit-text-stroke:0.2px #000;">64</div>
<div class="t" style="left:897.62px;top:836px;font-size:10.3px;line-height:10.3px;color:#000;transform:scaleX(0.8450);-webkit-text-stroke:0.2px #000;">63</div>
<div class="t" style="left:939.62px;top:836px;font-size:10.3px;line-height:10.3px;color:#000;transform:scaleX(0.8450);-webkit-text-stroke:0.2px #000;">57</div>
<div class="t" style="left:1000.52px;top:836px;font-size:10.3px;line-height:10.3px;color:#000;transform:scaleX(0.8450);-webkit-text-stroke:0.2px #000;">66</div>
<div class="t" style="left:1038.62px;top:836px;font-size:10.3px;line-height:10.3px;color:#000;transform:scaleX(0.8450);-webkit-text-stroke:0.2px #000;">40</div>
<div class="t" style="left:1265.12px;top:836px;font-size:10.3px;line-height:10.3px;color:#000;transform:scaleX(0.8450);-webkit-text-stroke:0.2px #000;">48</div>
<div class="t" style="left:1307.12px;top:836px;font-size:10.3px;line-height:10.3px;color:#000;transform:scaleX(0.8450);-webkit-text-stroke:0.2px #000;">70</div>
<div class="t" style="left:1350.32px;top:836px;font-size:10.3px;line-height:10.3px;color:#000;transform:scaleX(0.8450);-webkit-text-stroke:0.2px #000;">70</div>
<div class="t" style="left:1415.22px;top:836px;font-size:10.3px;line-height:10.3px;color:#000;transform:scaleX(0.8450);-webkit-text-stroke:0.2px #000;">77</div>
<div class="r" style="left:568.0px;top:848.5px;width:7px;height:7px;border:1px solid #9aa6b8;background:#f4f6fa"></div>
<div class="r" style="left:569.5px;top:851.5px;width:4px;height:1px;background:#4a5a78"></div>
<div class="r" style="left:630.8px;top:848.5px;width:7px;height:7px;border:1px solid #9aa6b8;background:#f4f6fa"></div>
<div class="r" style="left:632.3px;top:851.5px;width:4px;height:1px;background:#4a5a78"></div>
<div class="t" style="left:578.20px;top:848px;font-size:10.3px;line-height:10.3px;color:#000;font-weight:bold;transform:scaleX(1.0400);">Aug</div>
<div class="r" style="left:639px;top:846px;width:31px;height:11px;overflow:hidden">
<div class="t" style="left:1.40px;top:2px;font-size:10.3px;line-height:10.3px;color:#000;font-weight:bold;transform:scaleX(1.0400);">22-Au</div>
</div>
<div class="t" style="left:673.90px;top:848px;font-size:10.3px;line-height:10.3px;color:#000;transform:scaleX(0.8800);-webkit-text-stroke:0.2px #000;">D</div>
<div class="t" style="left:730.32px;top:848px;font-size:10.3px;line-height:10.3px;color:#000;transform:scaleX(0.8450);-webkit-text-stroke:0.2px #000;">65</div>
<div class="t" style="left:791.22px;top:848px;font-size:10.3px;line-height:10.3px;color:#000;transform:scaleX(0.8450);-webkit-text-stroke:0.2px #000;">63</div>
<div class="t" style="left:854.42px;top:848px;font-size:10.3px;line-height:10.3px;color:#000;transform:scaleX(0.8450);-webkit-text-stroke:0.2px #000;">65</div>
<div class="t" style="left:897.62px;top:848px;font-size:10.3px;line-height:10.3px;color:#000;transform:scaleX(0.8450);-webkit-text-stroke:0.2px #000;">63</div>
<div class="t" style="left:939.62px;top:848px;font-size:10.3px;line-height:10.3px;color:#000;transform:scaleX(0.8450);-webkit-text-stroke:0.2px #000;">60</div>
<div class="t" style="left:1000.52px;top:848px;font-size:10.3px;line-height:10.3px;color:#000;transform:scaleX(0.8450);-webkit-text-stroke:0.2px #000;">65</div>
<div class="t" style="left:1038.62px;top:848px;font-size:10.3px;line-height:10.3px;color:#000;transform:scaleX(0.8450);-webkit-text-stroke:0.2px #000;">45</div>
<div class="t" style="left:1265.12px;top:848px;font-size:10.3px;line-height:10.3px;color:#000;transform:scaleX(0.8450);-webkit-text-stroke:0.2px #000;">55</div>
<div class="t" style="left:1307.12px;top:848px;font-size:10.3px;line-height:10.3px;color:#000;transform:scaleX(0.8450);-webkit-text-stroke:0.2px #000;">70</div>
<div class="t" style="left:1350.32px;top:848px;font-size:10.3px;line-height:10.3px;color:#000;transform:scaleX(0.8450);-webkit-text-stroke:0.2px #000;">70</div>
<div class="t" style="left:1415.22px;top:848px;font-size:10.3px;line-height:10.3px;color:#000;transform:scaleX(0.8450);-webkit-text-stroke:0.2px #000;">75</div>
<div class="t" style="left:578.20px;top:860px;font-size:10.3px;line-height:10.3px;color:#000;font-weight:bold;transform:scaleX(1.0400);">Aug</div>
<div class="r" style="left:639px;top:858px;width:31px;height:11px;overflow:hidden">
<div class="t" style="left:1.40px;top:2px;font-size:10.3px;line-height:10.3px;color:#000;font-weight:bold;transform:scaleX(1.0400);">22-Au</div>
</div>
<div class="t" style="left:673.90px;top:860px;font-size:10.3px;line-height:10.3px;color:#000;transform:scaleX(0.8800);-webkit-text-stroke:0.2px #000;">N</div>
<div class="t" style="left:730.32px;top:860px;font-size:10.3px;line-height:10.3px;color:#000;transform:scaleX(0.8450);-webkit-text-stroke:0.2px #000;">59</div>
<div class="t" style="left:791.22px;top:860px;font-size:10.3px;line-height:10.3px;color:#000;transform:scaleX(0.8450);-webkit-text-stroke:0.2px #000;">59</div>
<div class="t" style="left:854.42px;top:860px;font-size:10.3px;line-height:10.3px;color:#000;transform:scaleX(0.8450);-webkit-text-stroke:0.2px #000;">63</div>
<div class="t" style="left:897.62px;top:860px;font-size:10.3px;line-height:10.3px;color:#000;transform:scaleX(0.8450);-webkit-text-stroke:0.2px #000;">59</div>
<div class="t" style="left:939.62px;top:860px;font-size:10.3px;line-height:10.3px;color:#000;transform:scaleX(0.8450);-webkit-text-stroke:0.2px #000;">62</div>
<div class="t" style="left:1000.52px;top:860px;font-size:10.3px;line-height:10.3px;color:#000;transform:scaleX(0.8450);-webkit-text-stroke:0.2px #000;">65</div>
<div class="t" style="left:1038.62px;top:860px;font-size:10.3px;line-height:10.3px;color:#000;transform:scaleX(0.8450);-webkit-text-stroke:0.2px #000;">52</div>
<div class="t" style="left:1265.12px;top:860px;font-size:10.3px;line-height:10.3px;color:#000;transform:scaleX(0.8450);-webkit-text-stroke:0.2px #000;">55</div>
<div class="t" style="left:1299.86px;top:860px;font-size:10.3px;line-height:10.3px;color:#000;transform:scaleX(0.8450);-webkit-text-stroke:0.2px #000;">71.6</div>
<div class="t" style="left:1343.06px;top:860px;font-size:10.3px;line-height:10.3px;color:#000;transform:scaleX(0.8450);-webkit-text-stroke:0.2px #000;">72.3</div>
<div class="t" style="left:1415.22px;top:860px;font-size:10.3px;line-height:10.3px;color:#000;transform:scaleX(0.8450);-webkit-text-stroke:0.2px #000;">80</div>
<div class="r" style="left:568.0px;top:872.5px;width:7px;height:7px;border:1px solid #9aa6b8;background:#f4f6fa"></div>
<div class="r" style="left:569.5px;top:875.5px;width:4px;height:1px;background:#4a5a78"></div>
<div class="r" style="left:630.8px;top:872.5px;width:7px;height:7px;border:1px solid #9aa6b8;background:#f4f6fa"></div>
<div class="r" style="left:632.3px;top:875.5px;width:4px;height:1px;background:#4a5a78"></div>
<div class="t" style="left:578.20px;top:872px;font-size:10.3px;line-height:10.3px;color:#000;font-weight:bold;transform:scaleX(1.0400);">Aug</div>
<div class="r" style="left:639px;top:870px;width:31px;height:11px;overflow:hidden">
<div class="t" style="left:1.40px;top:2px;font-size:10.3px;line-height:10.3px;color:#000;font-weight:bold;transform:scaleX(1.0400);">23-Au</div>
</div>
<div class="t" style="left:673.90px;top:872px;font-size:10.3px;line-height:10.3px;color:#000;transform:scaleX(0.8800);-webkit-text-stroke:0.2px #000;">D</div>
<div class="t" style="left:730.32px;top:872px;font-size:10.3px;line-height:10.3px;color:#000;transform:scaleX(0.8450);-webkit-text-stroke:0.2px #000;">60</div>
<div class="t" style="left:791.22px;top:872px;font-size:10.3px;line-height:10.3px;color:#000;transform:scaleX(0.8450);-webkit-text-stroke:0.2px #000;">62</div>
<div class="t" style="left:854.42px;top:872px;font-size:10.3px;line-height:10.3px;color:#000;transform:scaleX(0.8450);-webkit-text-stroke:0.2px #000;">60</div>
<div class="t" style="left:897.62px;top:872px;font-size:10.3px;line-height:10.3px;color:#000;transform:scaleX(0.8450);-webkit-text-stroke:0.2px #000;">62</div>
<div class="t" style="left:939.62px;top:872px;font-size:10.3px;line-height:10.3px;color:#000;transform:scaleX(0.8450);-webkit-text-stroke:0.2px #000;">65</div>
<div class="t" style="left:1000.52px;top:872px;font-size:10.3px;line-height:10.3px;color:#000;transform:scaleX(0.8450);-webkit-text-stroke:0.2px #000;">67</div>
<div class="t" style="left:1038.62px;top:872px;font-size:10.3px;line-height:10.3px;color:#000;transform:scaleX(0.8450);-webkit-text-stroke:0.2px #000;">50</div>
<div class="t" style="left:1265.12px;top:872px;font-size:10.3px;line-height:10.3px;color:#000;transform:scaleX(0.8450);-webkit-text-stroke:0.2px #000;">52</div>
<div class="t" style="left:1307.12px;top:872px;font-size:10.3px;line-height:10.3px;color:#000;transform:scaleX(0.8450);-webkit-text-stroke:0.2px #000;">75</div>
<div class="t" style="left:1350.32px;top:872px;font-size:10.3px;line-height:10.3px;color:#000;transform:scaleX(0.8450);-webkit-text-stroke:0.2px #000;">75</div>
<div class="t" style="left:1415.22px;top:872px;font-size:10.3px;line-height:10.3px;color:#000;transform:scaleX(0.8450);-webkit-text-stroke:0.2px #000;">80</div>
<div class="t" style="left:578.20px;top:884px;font-size:10.3px;line-height:10.3px;color:#000;font-weight:bold;transform:scaleX(1.0400);">Aug</div>
<div class="r" style="left:639px;top:882px;width:31px;height:11px;overflow:hidden">
<div class="t" style="left:1.40px;top:2px;font-size:10.3px;line-height:10.3px;color:#000;font-weight:bold;transform:scaleX(1.0400);">23-Au</div>
</div>
<div class="t" style="left:673.90px;top:884px;font-size:10.3px;line-height:10.3px;color:#000;transform:scaleX(0.8800);-webkit-text-stroke:0.2px #000;">N</div>
<div class="t" style="left:730.32px;top:884px;font-size:10.3px;line-height:10.3px;color:#000;transform:scaleX(0.8450);-webkit-text-stroke:0.2px #000;">62</div>
<div class="t" style="left:791.22px;top:884px;font-size:10.3px;line-height:10.3px;color:#000;transform:scaleX(0.8450);-webkit-text-stroke:0.2px #000;">60</div>
<div class="t" style="left:854.42px;top:884px;font-size:10.3px;line-height:10.3px;color:#000;transform:scaleX(0.8450);-webkit-text-stroke:0.2px #000;">62</div>
<div class="t" style="left:897.62px;top:884px;font-size:10.3px;line-height:10.3px;color:#000;transform:scaleX(0.8450);-webkit-text-stroke:0.2px #000;">60</div>
<div class="t" style="left:939.62px;top:884px;font-size:10.3px;line-height:10.3px;color:#000;transform:scaleX(0.8450);-webkit-text-stroke:0.2px #000;">65</div>
<div class="t" style="left:1000.52px;top:884px;font-size:10.3px;line-height:10.3px;color:#000;transform:scaleX(0.8450);-webkit-text-stroke:0.2px #000;">65</div>
<div class="t" style="left:1038.62px;top:884px;font-size:10.3px;line-height:10.3px;color:#000;transform:scaleX(0.8450);-webkit-text-stroke:0.2px #000;">40</div>
<div class="t" style="left:1265.12px;top:884px;font-size:10.3px;line-height:10.3px;color:#000;transform:scaleX(0.8450);-webkit-text-stroke:0.2px #000;">55</div>
<div class="t" style="left:1307.12px;top:884px;font-size:10.3px;line-height:10.3px;color:#000;transform:scaleX(0.8450);-webkit-text-stroke:0.2px #000;">75</div>
<div class="t" style="left:1350.32px;top:884px;font-size:10.3px;line-height:10.3px;color:#000;transform:scaleX(0.8450);-webkit-text-stroke:0.2px #000;">75</div>
<div class="t" style="left:1415.22px;top:884px;font-size:10.3px;line-height:10.3px;color:#000;transform:scaleX(0.8450);-webkit-text-stroke:0.2px #000;">80</div>
<div class="r" style="left:568.0px;top:896.5px;width:7px;height:7px;border:1px solid #9aa6b8;background:#f4f6fa"></div>
<div class="r" style="left:569.5px;top:899.5px;width:4px;height:1px;background:#4a5a78"></div>
<div class="r" style="left:630.8px;top:896.5px;width:7px;height:7px;border:1px solid #9aa6b8;background:#f4f6fa"></div>
<div class="r" style="left:632.3px;top:899.5px;width:4px;height:1px;background:#4a5a78"></div>
<div class="t" style="left:578.20px;top:896px;font-size:10.3px;line-height:10.3px;color:#000;font-weight:bold;transform:scaleX(1.0400);">Aug</div>
<div class="r" style="left:639px;top:894px;width:31px;height:11px;overflow:hidden">
<div class="t" style="left:1.40px;top:2px;font-size:10.3px;line-height:10.3px;color:#000;font-weight:bold;transform:scaleX(1.0400);">24-Au</div>
</div>
<div class="t" style="left:673.90px;top:896px;font-size:10.3px;line-height:10.3px;color:#000;transform:scaleX(0.8800);-webkit-text-stroke:0.2px #000;">D</div>
<div class="t" style="left:730.32px;top:896px;font-size:10.3px;line-height:10.3px;color:#000;transform:scaleX(0.8450);-webkit-text-stroke:0.2px #000;">60</div>
<div class="t" style="left:791.22px;top:896px;font-size:10.3px;line-height:10.3px;color:#000;transform:scaleX(0.8450);-webkit-text-stroke:0.2px #000;">63</div>
<div class="t" style="left:854.42px;top:896px;font-size:10.3px;line-height:10.3px;color:#000;transform:scaleX(0.8450);-webkit-text-stroke:0.2px #000;">60</div>
<div class="t" style="left:897.62px;top:896px;font-size:10.3px;line-height:10.3px;color:#000;transform:scaleX(0.8450);-webkit-text-stroke:0.2px #000;">63</div>
<div class="t" style="left:939.62px;top:896px;font-size:10.3px;line-height:10.3px;color:#000;transform:scaleX(0.8450);-webkit-text-stroke:0.2px #000;">65</div>
<div class="t" style="left:1000.52px;top:896px;font-size:10.3px;line-height:10.3px;color:#000;transform:scaleX(0.8450);-webkit-text-stroke:0.2px #000;">67</div>
<div class="t" style="left:1038.62px;top:896px;font-size:10.3px;line-height:10.3px;color:#000;transform:scaleX(0.8450);-webkit-text-stroke:0.2px #000;">47</div>
<div class="t" style="left:1265.12px;top:896px;font-size:10.3px;line-height:10.3px;color:#000;transform:scaleX(0.8450);-webkit-text-stroke:0.2px #000;">57</div>
<div class="t" style="left:1307.12px;top:896px;font-size:10.3px;line-height:10.3px;color:#000;transform:scaleX(0.8450);-webkit-text-stroke:0.2px #000;">72</div>
<div class="t" style="left:1350.32px;top:896px;font-size:10.3px;line-height:10.3px;color:#000;transform:scaleX(0.8450);-webkit-text-stroke:0.2px #000;">72</div>
<div class="t" style="left:1415.22px;top:896px;font-size:10.3px;line-height:10.3px;color:#000;transform:scaleX(0.8450);-webkit-text-stroke:0.2px #000;">80</div>
<div class="t" style="left:578.20px;top:908px;font-size:10.3px;line-height:10.3px;color:#000;font-weight:bold;transform:scaleX(1.0400);">Aug</div>
<div class="r" style="left:639px;top:906px;width:31px;height:11px;overflow:hidden">
<div class="t" style="left:1.40px;top:2px;font-size:10.3px;line-height:10.3px;color:#000;font-weight:bold;transform:scaleX(1.0400);">24-Au</div>
</div>
<div class="t" style="left:673.90px;top:908px;font-size:10.3px;line-height:10.3px;color:#000;transform:scaleX(0.8800);-webkit-text-stroke:0.2px #000;">N</div>
<div class="t" style="left:730.32px;top:908px;font-size:10.3px;line-height:10.3px;color:#000;transform:scaleX(0.8450);-webkit-text-stroke:0.2px #000;">60</div>
<div class="t" style="left:791.22px;top:908px;font-size:10.3px;line-height:10.3px;color:#000;transform:scaleX(0.8450);-webkit-text-stroke:0.2px #000;">62</div>
<div class="t" style="left:854.42px;top:908px;font-size:10.3px;line-height:10.3px;color:#000;transform:scaleX(0.8450);-webkit-text-stroke:0.2px #000;">62</div>
<div class="t" style="left:897.62px;top:908px;font-size:10.3px;line-height:10.3px;color:#000;transform:scaleX(0.8450);-webkit-text-stroke:0.2px #000;">62</div>
<div class="t" style="left:939.62px;top:908px;font-size:10.3px;line-height:10.3px;color:#000;transform:scaleX(0.8450);-webkit-text-stroke:0.2px #000;">65</div>
<div class="t" style="left:1000.52px;top:908px;font-size:10.3px;line-height:10.3px;color:#000;transform:scaleX(0.8450);-webkit-text-stroke:0.2px #000;">65</div>
<div class="t" style="left:1038.62px;top:908px;font-size:10.3px;line-height:10.3px;color:#000;transform:scaleX(0.8450);-webkit-text-stroke:0.2px #000;">48</div>
<div class="t" style="left:1265.12px;top:908px;font-size:10.3px;line-height:10.3px;color:#000;transform:scaleX(0.8450);-webkit-text-stroke:0.2px #000;">52</div>
<div class="t" style="left:1307.12px;top:908px;font-size:10.3px;line-height:10.3px;color:#000;transform:scaleX(0.8450);-webkit-text-stroke:0.2px #000;">72</div>
<div class="t" style="left:1350.32px;top:908px;font-size:10.3px;line-height:10.3px;color:#000;transform:scaleX(0.8450);-webkit-text-stroke:0.2px #000;">72</div>
<div class="t" style="left:1415.22px;top:908px;font-size:10.3px;line-height:10.3px;color:#000;transform:scaleX(0.8450);-webkit-text-stroke:0.2px #000;">80</div>
<div class="r" style="left:568.0px;top:920.5px;width:7px;height:7px;border:1px solid #9aa6b8;background:#f4f6fa"></div>
<div class="r" style="left:569.5px;top:923.5px;width:4px;height:1px;background:#4a5a78"></div>
<div class="r" style="left:630.8px;top:920.5px;width:7px;height:7px;border:1px solid #9aa6b8;background:#f4f6fa"></div>
<div class="r" style="left:632.3px;top:923.5px;width:4px;height:1px;background:#4a5a78"></div>
<div class="t" style="left:578.20px;top:920px;font-size:10.3px;line-height:10.3px;color:#000;font-weight:bold;transform:scaleX(1.0400);">Aug</div>
<div class="r" style="left:639px;top:918px;width:31px;height:11px;overflow:hidden">
<div class="t" style="left:1.40px;top:2px;font-size:10.3px;line-height:10.3px;color:#000;font-weight:bold;transform:scaleX(1.0400);">25-Au</div>
</div>
<div class="t" style="left:673.90px;top:920px;font-size:10.3px;line-height:10.3px;color:#000;transform:scaleX(0.8800);-webkit-text-stroke:0.2px #000;">D</div>
<div class="t" style="left:730.32px;top:920px;font-size:10.3px;line-height:10.3px;color:#000;transform:scaleX(0.8450);-webkit-text-stroke:0.2px #000;">60</div>
<div class="t" style="left:791.22px;top:920px;font-size:10.3px;line-height:10.3px;color:#000;transform:scaleX(0.8450);-webkit-text-stroke:0.2px #000;">63</div>
<div class="t" style="left:854.42px;top:920px;font-size:10.3px;line-height:10.3px;color:#000;transform:scaleX(0.8450);-webkit-text-stroke:0.2px #000;">67</div>
<div class="t" style="left:897.62px;top:920px;font-size:10.3px;line-height:10.3px;color:#000;transform:scaleX(0.8450);-webkit-text-stroke:0.2px #000;">67</div>
<div class="t" style="left:939.62px;top:920px;font-size:10.3px;line-height:10.3px;color:#000;transform:scaleX(0.8450);-webkit-text-stroke:0.2px #000;">68</div>
<div class="t" style="left:1000.52px;top:920px;font-size:10.3px;line-height:10.3px;color:#000;transform:scaleX(0.8450);-webkit-text-stroke:0.2px #000;">64</div>
<div class="t" style="left:1038.62px;top:920px;font-size:10.3px;line-height:10.3px;color:#000;transform:scaleX(0.8450);-webkit-text-stroke:0.2px #000;">56</div>
<div class="t" style="left:1265.12px;top:920px;font-size:10.3px;line-height:10.3px;color:#000;transform:scaleX(0.8450);-webkit-text-stroke:0.2px #000;">45</div>
<div class="t" style="left:1307.12px;top:920px;font-size:10.3px;line-height:10.3px;color:#000;transform:scaleX(0.8450);-webkit-text-stroke:0.2px #000;">73</div>
<div class="t" style="left:1350.32px;top:920px;font-size:10.3px;line-height:10.3px;color:#000;transform:scaleX(0.8450);-webkit-text-stroke:0.2px #000;">72</div>
<div class="t" style="left:1415.22px;top:920px;font-size:10.3px;line-height:10.3px;color:#000;transform:scaleX(0.8450);-webkit-text-stroke:0.2px #000;">80</div>
<div class="t" style="left:578.20px;top:932px;font-size:10.3px;line-height:10.3px;color:#000;font-weight:bold;transform:scaleX(1.0400);">Aug</div>
<div class="r" style="left:639px;top:930px;width:31px;height:11px;overflow:hidden">
<div class="t" style="left:1.40px;top:2px;font-size:10.3px;line-height:10.3px;color:#000;font-weight:bold;transform:scaleX(1.0400);">25-Au</div>
</div>
<div class="t" style="left:673.90px;top:932px;font-size:10.3px;line-height:10.3px;color:#000;transform:scaleX(0.8800);-webkit-text-stroke:0.2px #000;">N</div>
<div class="t" style="left:730.32px;top:932px;font-size:10.3px;line-height:10.3px;color:#000;transform:scaleX(0.8450);-webkit-text-stroke:0.2px #000;">60</div>
<div class="t" style="left:791.22px;top:932px;font-size:10.3px;line-height:10.3px;color:#000;transform:scaleX(0.8450);-webkit-text-stroke:0.2px #000;">60</div>
<div class="t" style="left:854.42px;top:932px;font-size:10.3px;line-height:10.3px;color:#000;transform:scaleX(0.8450);-webkit-text-stroke:0.2px #000;">60</div>
<div class="t" style="left:897.62px;top:932px;font-size:10.3px;line-height:10.3px;color:#000;transform:scaleX(0.8450);-webkit-text-stroke:0.2px #000;">62</div>
<div class="t" style="left:939.62px;top:932px;font-size:10.3px;line-height:10.3px;color:#000;transform:scaleX(0.8450);-webkit-text-stroke:0.2px #000;">63</div>
<div class="t" style="left:1000.52px;top:932px;font-size:10.3px;line-height:10.3px;color:#000;transform:scaleX(0.8450);-webkit-text-stroke:0.2px #000;">63</div>
<div class="t" style="left:1038.62px;top:932px;font-size:10.3px;line-height:10.3px;color:#000;transform:scaleX(0.8450);-webkit-text-stroke:0.2px #000;">50</div>
<div class="t" style="left:1265.12px;top:932px;font-size:10.3px;line-height:10.3px;color:#000;transform:scaleX(0.8450);-webkit-text-stroke:0.2px #000;">50</div>
<div class="t" style="left:1307.12px;top:932px;font-size:10.3px;line-height:10.3px;color:#000;transform:scaleX(0.8450);-webkit-text-stroke:0.2px #000;">70</div>
<div class="t" style="left:1350.32px;top:932px;font-size:10.3px;line-height:10.3px;color:#000;transform:scaleX(0.8450);-webkit-text-stroke:0.2px #000;">70</div>
<div class="t" style="left:1415.22px;top:932px;font-size:10.3px;line-height:10.3px;color:#000;transform:scaleX(0.8450);-webkit-text-stroke:0.2px #000;">80</div>
<div class="r" style="left:568.0px;top:944.5px;width:7px;height:7px;border:1px solid #9aa6b8;background:#f4f6fa"></div>
<div class="r" style="left:569.5px;top:947.5px;width:4px;height:1px;background:#4a5a78"></div>
<div class="r" style="left:630.8px;top:944.5px;width:7px;height:7px;border:1px solid #9aa6b8;background:#f4f6fa"></div>
<div class="r" style="left:632.3px;top:947.5px;width:4px;height:1px;background:#4a5a78"></div>
<div class="t" style="left:578.20px;top:944px;font-size:10.3px;line-height:10.3px;color:#000;font-weight:bold;transform:scaleX(1.0400);">Aug</div>
<div class="r" style="left:639px;top:942px;width:31px;height:11px;overflow:hidden">
<div class="t" style="left:1.40px;top:2px;font-size:10.3px;line-height:10.3px;color:#000;font-weight:bold;transform:scaleX(1.0400);">26-Au</div>
</div>
<div class="t" style="left:673.90px;top:944px;font-size:10.3px;line-height:10.3px;color:#000;transform:scaleX(0.8800);-webkit-text-stroke:0.2px #000;">D</div>
<div class="t" style="left:730.32px;top:944px;font-size:10.3px;line-height:10.3px;color:#000;transform:scaleX(0.8450);-webkit-text-stroke:0.2px #000;">60</div>
<div class="t" style="left:791.22px;top:944px;font-size:10.3px;line-height:10.3px;color:#000;transform:scaleX(0.8450);-webkit-text-stroke:0.2px #000;">66</div>
<div class="t" style="left:854.42px;top:944px;font-size:10.3px;line-height:10.3px;color:#000;transform:scaleX(0.8450);-webkit-text-stroke:0.2px #000;">58</div>
<div class="t" style="left:897.62px;top:944px;font-size:10.3px;line-height:10.3px;color:#000;transform:scaleX(0.8450);-webkit-text-stroke:0.2px #000;">71</div>
<div class="t" style="left:939.62px;top:944px;font-size:10.3px;line-height:10.3px;color:#000;transform:scaleX(0.8450);-webkit-text-stroke:0.2px #000;">63</div>
<div class="t" style="left:1000.52px;top:944px;font-size:10.3px;line-height:10.3px;color:#000;transform:scaleX(0.8450);-webkit-text-stroke:0.2px #000;">67</div>
<div class="t" style="left:1038.62px;top:944px;font-size:10.3px;line-height:10.3px;color:#000;transform:scaleX(0.8450);-webkit-text-stroke:0.2px #000;">40</div>
<div class="t" style="left:1265.12px;top:944px;font-size:10.3px;line-height:10.3px;color:#000;transform:scaleX(0.8450);-webkit-text-stroke:0.2px #000;">54</div>
<div class="t" style="left:1307.12px;top:944px;font-size:10.3px;line-height:10.3px;color:#000;transform:scaleX(0.8450);-webkit-text-stroke:0.2px #000;">71</div>
<div class="t" style="left:1350.32px;top:944px;font-size:10.3px;line-height:10.3px;color:#000;transform:scaleX(0.8450);-webkit-text-stroke:0.2px #000;">71</div>
<div class="t" style="left:1415.22px;top:944px;font-size:10.3px;line-height:10.3px;color:#000;transform:scaleX(0.8450);-webkit-text-stroke:0.2px #000;">78</div>
<div class="r" style="left:576px;top:519px;width:495px;height:243px;background:radial-gradient(ellipse 75% 75% at 50% 50%, #595959 0%, #474747 45%, #2a2a2a 100%)"></div>
<svg style="left:576px;top:519px" width="495" height="243" viewBox="576 519 495 243"><defs><linearGradient id="bg1" x1="0" y1="0" x2="0" y2="1"><stop offset="0" stop-color="#5c81d0"/><stop offset="1" stop-color="#2d5db8"/></linearGradient></defs><line x1="601.5" y1="568.2" x2="1027.5" y2="568.2" stroke="#585858" stroke-width="1"/><line x1="601.5" y1="594.3" x2="1027.5" y2="594.3" stroke="#585858" stroke-width="1"/><line x1="601.5" y1="621.1" x2="1027.5" y2="621.1" stroke="#585858" stroke-width="1"/><line x1="601.5" y1="647.0" x2="1027.5" y2="647.0" stroke="#585858" stroke-width="1"/><line x1="601.5" y1="673.3" x2="1027.5" y2="673.3" stroke="#585858" stroke-width="1"/><line x1="601.5" y1="700.0" x2="1027.5" y2="700.0" stroke="#585858" stroke-width="1"/></svg>
<svg style="left:576px;top:519px" width="495" height="243" viewBox="576 519 495 243"><defs><linearGradient id="bg2" x1="0" y1="0" x2="0" y2="1"><stop offset="0" stop-color="#5c81d0"/><stop offset="1" stop-color="#2d5db8"/></linearGradient></defs><rect x="656.5" y="578.5" width="106" height="148" fill="#1e1e1e" opacity="0.35"/><rect x="655.3" y="578" width="106" height="147.8" fill="url(#bg2)"/><rect x="869" y="674" width="106.5" height="52" fill="#1e1e1e" opacity="0.35"/><rect x="867.8" y="673.6" width="106.5" height="52.2" fill="url(#bg2)"/><line x1="601.5" y1="725.8" x2="1027.5" y2="725.8" stroke="#9d9d9d" stroke-width="1"/><rect x="1038.5" y="650.5" width="4.5" height="4.5" fill="#4472c4"/></svg>
<div class="t" style="left:581.29px;top:564px;font-size:7.2px;line-height:7.2px;color:#d9d9d9;transform:scaleX(0.9500);">48.8</div>
<div class="t" style="left:581.29px;top:590px;font-size:7.2px;line-height:7.2px;color:#d9d9d9;transform:scaleX(0.9500);">48.6</div>
<div class="t" style="left:581.29px;top:617px;font-size:7.2px;line-height:7.2px;color:#d9d9d9;transform:scaleX(0.9500);">48.4</div>
<div class="t" style="left:581.29px;top:643px;font-size:7.2px;line-height:7.2px;color:#d9d9d9;transform:scaleX(0.9500);">48.2</div>
<div class="t" style="left:586.99px;top:670px;font-size:7.2px;line-height:7.2px;color:#d9d9d9;transform:scaleX(0.9500);">48</div>
<div class="t" style="left:581.29px;top:696px;font-size:7.2px;line-height:7.2px;color:#d9d9d9;transform:scaleX(0.9500);">47.8</div>
<div class="t" style="left:581.29px;top:722px;font-size:7.2px;line-height:7.2px;color:#d9d9d9;transform:scaleX(0.9500);">47.6</div>
<div class="t" style="left:710.30px;top:546px;font-size:11.5px;line-height:11.5px;color:#f2f2f2;font-weight:bold;transform:scaleX(1.0611);">YARN USAGE ACCORDING TO BEAMS</div>
<div class="t" style="left:696.80px;top:732px;font-size:7.2px;line-height:7.2px;color:#d9d9d9;transform:scaleX(0.8329);">BACK3L</div>
<div class="t" style="left:909.30px;top:732px;font-size:7.2px;line-height:7.2px;color:#d9d9d9;transform:scaleX(0.7983);">BACK3R</div>
<div class="t" style="left:1045.30px;top:649px;font-size:7.5px;line-height:7.5px;color:#e6e6e6;transform:scaleX(1.0415);">Total</div>
<div class="r" style="left:582.9px;top:524.2px;width:48.1px;height:9.6px;background:linear-gradient(#f4f4f4,#d2d2d2);border:1px solid #9a9a9a"></div>
<div class="t" style="left:586.40px;top:528px;font-size:5.8px;line-height:5.8px;color:#3a3a5a;transform:scaleX(0.8438);">Sum of USAGE</div>
<div class="r" style="left:583.0px;top:746.0px;width:46.0px;height:9.5px;background:linear-gradient(#f4f4f4,#d2d2d2);border:1px solid #9a9a9a"></div>
<div class="t" style="left:586.50px;top:750px;font-size:5.8px;line-height:5.8px;color:#3a3a5a;transform:scaleX(0.7190);">RACK NO</div>
<svg style="left:611.0px;top:745.8px" width="16" height="10" viewBox="0 0 16 10"><path d="M0.5 4.5 L5 4.5 L2.75 7.5 Z" fill="#333"/><path d="M5 1 L14 1 L10.5 4.5 L10.5 9.5 L8.5 9.5 L8.5 4.5 Z" fill="#666"/></svg>
<div class="r" style="left:11px;top:762px;width:432px;height:179px;background:radial-gradient(ellipse 75% 75% at 50% 50%, #595959 0%, #474747 45%, #2a2a2a 100%)"></div>
<svg style="left:11px;top:762px" width="432" height="179" viewBox="11 762 432 179"><defs><linearGradient id="cb" x1="0" y1="0" x2="0" y2="1"><stop offset="0" stop-color="#5c81d0"/><stop offset="1" stop-color="#2d5db8"/></linearGradient><linearGradient id="co" x1="0" y1="0" x2="0" y2="1"><stop offset="0" stop-color="#f08a4b"/><stop offset="1" stop-color="#e46b14"/></linearGradient></defs><line x1="35.2" y1="787.0" x2="375.6" y2="787.0" stroke="#585858" stroke-width="1"/><line x1="35.2" y1="803.9" x2="375.6" y2="803.9" stroke="#585858" stroke-width="1"/><line x1="35.2" y1="820.8" x2="375.6" y2="820.8" stroke="#585858" stroke-width="1"/><line x1="35.2" y1="837.5" x2="375.6" y2="837.5" stroke="#585858" stroke-width="1"/><line x1="35.2" y1="854.2" x2="375.6" y2="854.2" stroke="#585858" stroke-width="1"/><line x1="35.2" y1="870.7" x2="375.6" y2="870.7" stroke="#585858" stroke-width="1"/><rect x="44.2" y="855.8" width="17.9" height="31.8" fill="url(#cb)"/><rect x="65.8" y="852.8" width="18.1" height="34.8" fill="url(#co)"/><rect x="100.8" y="871.7" width="18.4" height="15.9" fill="url(#cb)"/><rect x="122.8" y="870.7" width="17.4" height="16.9" fill="url(#co)"/><rect x="157.9" y="886.0" width="17.3" height="1.6" fill="url(#cb)"/><rect x="179.9" y="886.2" width="17.3" height="1.4" fill="url(#co)"/><rect x="214.9" y="822.8" width="17.1" height="64.8" fill="url(#cb)"/><rect x="236.1" y="817.8" width="17.9" height="69.8" fill="url(#co)"/><rect x="270.9" y="808.0" width="18.1" height="79.6" fill="url(#cb)"/><rect x="293.1" y="810.6" width="16.9" height="77.0" fill="url(#co)"/><rect x="328.0" y="844.6" width="17.0" height="43.0" fill="url(#cb)"/><rect x="350.2" y="837.9" width="16.9" height="49.7" fill="url(#co)"/><line x1="35.2" y1="887.6" x2="375.6" y2="887.6" stroke="#9d9d9d" stroke-width="1"/><rect x="389" y="848.8" width="4.2" height="4" fill="#4472c4"/><rect x="389" y="862.6" width="4.2" height="4" fill="#ed7d31"/></svg>
<div class="t" style="left:15.30px;top:783px;font-size:7.2px;line-height:7.2px;color:#d9d9d9;transform:scaleX(0.9847);">6.00</div>
<div class="t" style="left:15.30px;top:800px;font-size:7.2px;line-height:7.2px;color:#d9d9d9;transform:scaleX(0.9847);">5.00</div>
<div class="t" style="left:15.30px;top:817px;font-size:7.2px;line-height:7.2px;color:#d9d9d9;transform:scaleX(0.9847);">4.00</div>
<div class="t" style="left:15.30px;top:834px;font-size:7.2px;line-height:7.2px;color:#d9d9d9;transform:scaleX(0.9847);">3.00</div>
<div class="t" style="left:15.30px;top:850px;font-size:7.2px;line-height:7.2px;color:#d9d9d9;transform:scaleX(0.9847);">2.00</div>
<div class="t" style="left:15.30px;top:867px;font-size:7.2px;line-height:7.2px;color:#d9d9d9;transform:scaleX(0.9847);">1.00</div>
<div class="t" style="left:15.30px;top:884px;font-size:7.2px;line-height:7.2px;color:#d9d9d9;transform:scaleX(0.9847);">0.00</div>
<div class="t" style="left:45.94px;top:894px;font-size:6.8px;line-height:6.8px;color:#d9d9d9;transform:scaleX(0.9000);">BACK BEAM</div>
<div class="t" style="left:45.94px;top:904px;font-size:6.8px;line-height:6.8px;color:#d9d9d9;transform:scaleX(0.9000);">USAGE PER</div>
<div class="t" style="left:53.09px;top:913px;font-size:6.8px;line-height:6.8px;color:#d9d9d9;transform:scaleX(0.9000);">METER</div>
<div class="t" style="left:99.42px;top:894px;font-size:6.8px;line-height:6.8px;color:#d9d9d9;transform:scaleX(0.9000);">BINDER BEAM</div>
<div class="t" style="left:102.64px;top:904px;font-size:6.8px;line-height:6.8px;color:#d9d9d9;transform:scaleX(0.9000);">USAGE PER</div>
<div class="t" style="left:109.79px;top:913px;font-size:6.8px;line-height:6.8px;color:#d9d9d9;transform:scaleX(0.9000);">METER</div>
<div class="t" style="left:158.81px;top:894px;font-size:6.8px;line-height:6.8px;color:#d9d9d9;transform:scaleX(0.9000);">EDGE BEAM</div>
<div class="t" style="left:159.14px;top:904px;font-size:6.8px;line-height:6.8px;color:#d9d9d9;transform:scaleX(0.9000);">USAGE PER</div>
<div class="t" style="left:166.29px;top:913px;font-size:6.8px;line-height:6.8px;color:#d9d9d9;transform:scaleX(0.9000);">METER</div>
<div class="t" style="left:216.29px;top:894px;font-size:6.8px;line-height:6.8px;color:#d9d9d9;transform:scaleX(0.9000);">FACE BEAM</div>
<div class="t" style="left:215.94px;top:904px;font-size:6.8px;line-height:6.8px;color:#d9d9d9;transform:scaleX(0.9000);">USAGE PER</div>
<div class="t" style="left:223.09px;top:913px;font-size:6.8px;line-height:6.8px;color:#d9d9d9;transform:scaleX(0.9000);">METER</div>
<div class="t" style="left:268.23px;top:894px;font-size:6.8px;line-height:6.8px;color:#d9d9d9;transform:scaleX(0.9000);">RUBBER BEAM</div>
<div class="t" style="left:272.64px;top:904px;font-size:6.8px;line-height:6.8px;color:#d9d9d9;transform:scaleX(0.9000);">USAGE PER</div>
<div class="t" style="left:279.79px;top:913px;font-size:6.8px;line-height:6.8px;color:#d9d9d9;transform:scaleX(0.9000);">METER</div>
<div class="t" style="left:328.52px;top:894px;font-size:6.8px;line-height:6.8px;color:#d9d9d9;transform:scaleX(0.9000);">TOTAL WEFT</div>
<div class="t" style="left:329.64px;top:904px;font-size:6.8px;line-height:6.8px;color:#d9d9d9;transform:scaleX(0.9000);">USAGE PER</div>
<div class="t" style="left:336.79px;top:913px;font-size:6.8px;line-height:6.8px;color:#d9d9d9;transform:scaleX(0.9000);">METER</div>
<div class="r" style="left:16.9px;top:767.2px;width:41.8px;height:9.8px;background:linear-gradient(#f4f4f4,#d2d2d2);border:1px solid #9a9a9a"></div>
<div class="t" style="left:20.40px;top:771px;font-size:5.8px;line-height:5.8px;color:#3a3a5a;transform:scaleX(0.8179);">Sum of CALC</div>
<div class="r" style="left:59.7px;top:767.2px;width:43.2px;height:9.8px;background:linear-gradient(#f4f4f4,#d2d2d2);border:1px solid #9a9a9a"></div>
<div class="t" style="left:63.20px;top:771px;font-size:5.8px;line-height:5.8px;color:#3a3a5a;transform:scaleX(0.8664);">Sum of SPEC</div>
<div class="r" style="left:385.8px;top:831.8px;width:50.2px;height:10.2px;background:linear-gradient(#f4f4f4,#d2d2d2);border:1px solid #9a9a9a"></div>
<div class="t" style="left:389.30px;top:836px;font-size:5.8px;line-height:5.8px;color:#3a3a5a;transform:scaleX(0.8668);">Values</div>
<div class="t" style="left:394.70px;top:848px;font-size:6.8px;line-height:6.8px;color:#e6e6e6;transform:scaleX(0.9381);">Sum of CALC</div>
<div class="t" style="left:394.70px;top:862px;font-size:6.8px;line-height:6.8px;color:#e6e6e6;transform:scaleX(0.9178);">Sum of SPEC</div>
<div class="r" style="left:16.9px;top:925.1px;width:45.8px;height:9.6px;background:linear-gradient(#f4f4f4,#d2d2d2);border:1px solid #9a9a9a"></div>
<div class="t" style="left:20.40px;top:929px;font-size:5.8px;line-height:5.8px;color:#3a3a5a;transform:scaleX(0.6713);">YRAN TYPE</div>
<svg style="left:47.7px;top:926.9px" width="10" height="7" viewBox="0 0 10 7"><path d="M1 1 L9 1 L5 6 Z" fill="#333"/></svg>
<div class="r" style="left:11px;top:944px;width:282px;height:13px;background:#3d3d3d"></div>
<div class="r" style="left:16.9px;top:948.5px;width:41.8px;height:8.5px;background:linear-gradient(#f4f4f4,#d2d2d2);border:1px solid #9a9a9a"></div>
<div class="t" style="left:20.40px;top:952px;font-size:5.8px;line-height:5.8px;color:#3a3a5a;transform:scaleX(0.8179);">Sum of CALC</div>
<div class="r" style="left:59.7px;top:948.5px;width:43.2px;height:8.5px;background:linear-gradient(#f4f4f4,#d2d2d2);border:1px solid #9a9a9a"></div>
<div class="t" style="left:63.20px;top:952px;font-size:5.8px;line-height:5.8px;color:#3a3a5a;transform:scaleX(0.8664);">Sum of SPEC</div>
<div class="r" style="left:0px;top:958px;width:1567px;height:28px;background:#e6e6e6"></div>
<div class="r" style="left:0px;top:957px;width:1567px;height:1px;background:#a8a8a8"></div>
<div class="r" style="left:0px;top:986px;width:1567px;height:1px;background:#cfcfcf"></div>
<div class="r" style="left:0px;top:987px;width:1567px;height:19px;background:#f3f3f3"></div>
<div class="r" style="left:0px;top:958px;width:3px;height:28px;background:#e2e8f0"></div>
<svg style="left:10px;top:962px" width="50" height="20" viewBox="0 0 50 20">
<path d="M11 5 L6 10 L11 15 Z" fill="#c4c4c4"/><path d="M34 5 L39 10 L34 15 Z" fill="#c4c4c4"/>
</svg>
<div class="r" style="left:90px;top:961px;width:1px;height:21px;background:#8a8a8a"></div>
<div class="t" style="left:100.00px;top:960px;font-size:16.5px;line-height:16.5px;color:#444;transform:scaleX(1.2064);">W128</div>
<div class="r" style="left:161px;top:961px;width:1px;height:21px;background:#8a8a8a"></div>
<div class="r" style="left:164px;top:960px;width:100px;height:23px;background:#ff0000"></div>
<div class="t" style="left:178.00px;top:960px;font-size:16.5px;line-height:16.5px;color:#ffffff;transform:scaleX(1.0196);">w128 wrp</div>
<div class="r" style="left:266px;top:957px;width:108px;height:26px;background:#ffffff"></div>
<div class="r" style="left:266px;top:981px;width:108px;height:2px;background:#0f6b3a"></div>
<div class="r" style="left:266px;top:957px;width:1px;height:24px;background:#9a9a9a"></div>
<div class="t" style="left:278.50px;top:960px;font-size:16.5px;line-height:16.5px;color:#107c41;font-weight:bold;transform:scaleX(1.0172);">W128 CLC</div>
<div class="t" style="left:386.00px;top:960px;font-size:16.5px;line-height:16.5px;color:#444;transform:scaleX(0.9943);">Sheet1</div>
<div class="r" style="left:451px;top:961px;width:1px;height:21px;background:#8a8a8a"></div>
<svg style="left:482px;top:960px" width="24" height="24" viewBox="0 0 24 24">
<circle cx="12" cy="12" r="9.5" fill="none" stroke="#c8c8c8" stroke-width="1.3"/>
<path d="M12 6.5 V17.5 M6.5 12 H17.5" stroke="#c8c8c8" stroke-width="1.5"/></svg>
<div class="r" style="left:1136px;top:966px;width:3px;height:3px;background:#333"></div>
<div class="r" style="left:1136px;top:971px;width:3px;height:3px;background:#333"></div>
<div class="r" style="left:1136px;top:976px;width:3px;height:3px;background:#333"></div>
<div class="r" style="left:1152px;top:960px;width:430px;height:21px;background:#f2f2f2;border-radius:10px"></div>
<svg style="left:1155px;top:963px" width="16" height="16" viewBox="0 0 16 16"><path d="M11 2.5 L4 8 L11 13.5 Z" fill="#6e6e6e"/></svg>
<div class="r" style="left:1173px;top:965px;width:400px;height:11px;background:#6e6e6e;border-radius:5.5px"></div>
<div class="r" style="left:1535px;top:987px;width:32px;height:19px;background:#e9e9e9"></div>
<div class="t" style="left:-0.50px;top:993px;font-size:14.5px;line-height:14.5px;color:#333;transform:scaleX(0.7754);">Ready</div>
<svg style="left:1546px;top:990px" width="27" height="16" viewBox="0 0 27 16">
<g stroke="#333" stroke-width="1" fill="none"><rect x="5.5" y="3.5" width="20" height="14"/>
<line x1="10.5" y1="3.5" x2="10.5" y2="17"/><line x1="15.5" y1="3.5" x2="15.5" y2="17"/><line x1="20.5" y1="3.5" x2="20.5" y2="17"/>
<line x1="5.5" y1="8" x2="25.5" y2="8"/><line x1="5.5" y1="12.5" x2="25.5" y2="12.5"/></g></svg></body></html>
